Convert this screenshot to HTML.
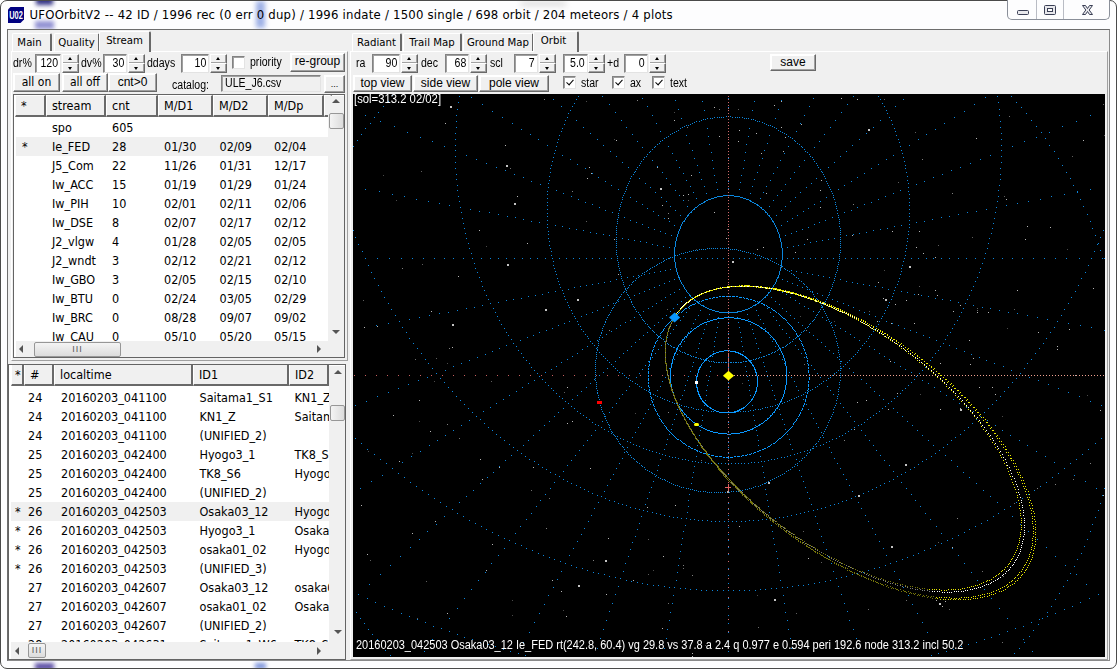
<!DOCTYPE html>
<html><head><meta charset="utf-8"><title>UFOOrbitV2</title>
<style>
*{box-sizing:border-box;margin:0;padding:0}
html,body{width:1117px;height:669px;overflow:hidden;background:#fff}
body{position:relative;font-family:"Liberation Sans","Noto Sans CJK JP",sans-serif;font-size:12px;color:#000}
.a{position:absolute}
#win{left:0;top:0;width:1117px;height:669px;background:#fdfdfe;border:1px solid #4a4a4a;border-radius:7px 7px 7px 7px;box-shadow:inset 0 0 0 1px #fff}
#client{left:7px;top:29px;width:1103px;height:632px;background:#f0f0f0;border-left:1px solid #6d6d6d;border-top:1px solid #6d6d6d;border-right:1px solid #8a8a8a;border-bottom:1px solid #8a8a8a}
#title{left:29.5px;top:5px;font-family:"DejaVu Sans Condensed","Liberation Sans",sans-serif;font-size:13px;letter-spacing:.22px;line-height:20px;white-space:nowrap;color:#000}
#icon{left:8px;top:7px;width:16px;height:16px;background:#000080;border-radius:2px;color:#fff;font-size:8px;font-weight:bold;line-height:16px;text-align:center;letter-spacing:-0.5px}
#ctl{left:1007px;top:0;width:103px;height:20px;border:1px solid #8a8f99;border-top:none;border-radius:0 0 5px 5px;background:#fdfdfe}
#ctl i{position:absolute;top:0;width:1px;height:19px;background:#b9bcc4}
.tab{font-family:"DejaVu Sans Condensed","Liberation Sans",sans-serif;height:18px;top:33px;border:1px solid #fff;border-right:2px solid #696969;border-bottom:none;border-radius:2px 2px 0 0;background:#f0f0f0;text-align:center;line-height:17px;font-size:11.3px;white-space:nowrap}
.tab.sel{top:31px;height:21px;line-height:18px;z-index:3;border-left:1px solid #fff;border-top:1px solid #fff}
.pane{border:1px solid #fff;border-right:1px solid #a0a0a0;border-bottom:1px solid #a0a0a0;background:#f0f0f0}
.lbl{font-size:12px;line-height:14px;white-space:nowrap;transform:scaleX(.88);transform-origin:0 50%}
.g{display:inline-block;transform:scaleX(.88);transform-origin:100% 50%}
.gc{display:inline-block;transform:scaleX(.9);transform-origin:50% 50%}
.dj{font-family:"DejaVu Sans Condensed","Liberation Sans",sans-serif;font-size:11px}
.inp{height:19px;background:#fff;border:1px solid #828282;border-right-color:#e3e3e3;border-bottom-color:#e3e3e3;box-shadow:inset 1px 1px 0 #a0a0a0;text-align:right;font-size:12px;line-height:16px;padding-right:2px}
.spin{width:17px;height:19px}
.spin b{position:absolute;left:0;width:17px;height:10px;background:#f0f0f0;border:1px solid #fff;border-right:1px solid #696969;border-bottom:1px solid #696969;box-shadow:inset -1px -1px 0 #a0a0a0}
.spin b:first-child{top:0}.spin b:last-child{top:9px}
.spin b::after{content:"";position:absolute;left:5px;top:2px;border:2.5px solid transparent}
.spin b:first-child::after{border-bottom:3px solid #000;border-top:none}
.spin b:last-child::after{border-top:3px solid #000;border-bottom:none;top:3px}
.btn{background:#f0f0f0;border:1px solid #fff;border-right:1px solid #696969;border-bottom:1px solid #696969;box-shadow:inset -1px -1px 0 #a0a0a0,inset 1px 1px 0 #fff;text-align:center;font-size:12px;white-space:nowrap}
.chk{width:13px;height:13px;background:#fff;border:1px solid #828282;border-right-color:#e3e3e3;border-bottom-color:#e3e3e3;box-shadow:inset 1px 1px 0 #a0a0a0}
.chk.on::after{content:"";position:absolute;left:3.500px;top:1px;width:3px;height:6px;border:solid #000;border-width:0 1.700px 1.700px 0;transform:rotate(42deg)}
.list{background:#fff;overflow:hidden}
.frame{background:#fff;border:1px solid #646464}
.hd{font-family:"DejaVu Sans Condensed","Liberation Sans",sans-serif;top:1px;height:22px;background:#f0f0f0;border:1px solid #fff;border-right:2px solid #696969;border-bottom:2px solid #696969;font-size:12.5px;line-height:19px;padding-left:5px;white-space:nowrap;overflow:hidden}
.row{font-family:"DejaVu Sans Condensed","Liberation Sans",sans-serif;left:2px;height:19px;font-size:12.5px;line-height:19px;white-space:nowrap}
.row span{position:absolute;top:0}
.row.sel{background:#f0f0f0}
.sb{background:#f0f0f0}
.thumb{background:linear-gradient(90deg,#f4f4f4,#dcdcdc);border:1px solid #979797;border-radius:2px}
.thumbh{background:linear-gradient(180deg,#f4f4f4,#dcdcdc);border:1px solid #979797;border-radius:2px}
.ar{width:0;height:0;border:4px solid transparent}
#cv{left:353px;top:94px;width:752px;height:563px;background:#000;overflow:hidden}
#cv svg{position:absolute;left:-1px;top:-1px}
.ct{color:#fff;font-size:12px;line-height:13px;white-space:nowrap;transform-origin:0 0}
</style></head><body>
<div id="win" class="a"></div>
<div class="a" style="left:1px;top:1px;width:1115px;height:667px;overflow:hidden;border-radius:6px">
<div class="a" style="left:35px;top:-5px;width:17px;height:9px;background:#2a2a80;filter:blur(2px);opacity:.95"></div>
<div class="a" style="left:34px;top:20px;width:19px;height:8px;background:#8080cc;filter:blur(2px);opacity:.85"></div>
<div class="a" style="left:255px;top:0px;width:9px;height:27px;background:#5c7cd6;filter:blur(2.5px);opacity:.6"></div>
<div class="a" style="left:34px;top:662px;width:19px;height:7px;background:#3f2f95;filter:blur(2px);opacity:.85"></div>
<div class="a" style="left:254px;top:662px;width:11px;height:6px;background:#4f6fd0;filter:blur(2px);opacity:.75"></div>
<div class="a" style="left:520px;top:0px;width:45px;height:5px;background:#9a9a9a;filter:blur(3px);opacity:.35"></div>
</div>
<svg class="a" style="left:8px;top:7px" width="16" height="16" viewBox="0 0 16 16"><path d="M2.500 0H16V12.500L12.500 16H0V2.500Z" fill="#000080"/><text x="1.200" y="11.600" font-size="10" font-weight="bold" fill="#fff" font-family="Liberation Sans,sans-serif" textLength="13.600" lengthAdjust="spacingAndGlyphs">U02</text></svg>
<div id="title" class="a">UFOOrbitV2 -- 42 ID / 1996 rec (0 err 0 dup) / 1996 indate / 1500 single / 698 orbit / 204 meteors / 4 plots</div>
<div id="ctl" class="a"><i style="left:28px"></i><i style="left:55px"></i>
<svg class="a" style="left:0;top:0" width="103" height="20" viewBox="0 0 103 20"><rect x="9.5" y="10.5" width="11" height="4" rx="1" fill="#e8e8ec" stroke="#3a3f55"/><rect x="36.500" y="5.500" width="11" height="9" rx="1" fill="#e8e8ec" stroke="#3a3f55"/><rect x="39.500" y="8.500" width="5" height="3" fill="#fff" stroke="#3a3f55"/><path d="M74.500 5.500h3l2 3 2-3h3l-3.300 4.500 3.300 4.500h-3l-2-3-2 3h-3l3.300-4.500z" fill="#e8e8ec" stroke="#3a3f55" stroke-width="1"/></svg></div>
<div id="client" class="a"></div>
<div class="a pane" style="left:11px;top:51px;width:337px;height:310px"></div>
<div class="a tab" style="left:12px;width:40px"><span style="position:relative;left:-2px">Main</span></div>
<div class="a tab" style="left:54px;width:46px">Quality</div>
<div class="a tab sel" style="left:99px;width:52px">Stream</div>
<div class="a lbl" style="left:13px;top:55.5px;">dr%</div>
<div class="a inp" style="left:35px;top:54px;width:26px"><span class="g">120</span></div>
<div class="a spin" style="left:62px;top:54px"><b></b><b></b></div>
<div class="a lbl" style="left:81px;top:55.5px;">dv%</div>
<div class="a inp" style="left:103px;top:54px;width:24px"><span class="g">30</span></div>
<div class="a spin" style="left:128px;top:54px"><b></b><b></b></div>
<div class="a lbl" style="left:147px;top:55.5px;">ddays</div>
<div class="a inp" style="left:181px;top:54px;width:28px"><span class="g">10</span></div>
<div class="a spin" style="left:210px;top:54px"><b></b><b></b></div>
<div class="a chk" style="left:232px;top:56px"></div>
<div class="a lbl" style="left:250px;top:54.5px;">priority</div>
<div class="a btn " style="left:290px;top:53px;width:55px;height:19px;line-height:14px">re-group</div>
<div class="a btn dj" style="left:13px;top:73px;width:47px;height:19px;line-height:17px">all on</div>
<div class="a btn dj" style="left:62px;top:73px;width:46px;height:19px;line-height:17px">all off</div>
<div class="a btn " style="left:108px;top:73px;width:49px;height:19px;line-height:17px">cnt&gt;0</div>
<div class="a lbl" style="left:172px;top:78px;">catalog:</div>
<div class="a inp" style="left:221px;top:75px;width:100px;height:17px;text-align:left;padding-left:3px;line-height:15px;background:#f0f0f0"><span class="g" style="transform-origin:0 50%">ULE_J6.csv</span></div>
<div class="a btn " style="left:324px;top:75px;width:21px;height:18px;line-height:12px"><span style="font-size:9px;position:relative;top:1px">...</span></div>
<div class="a frame" style="left:13px;top:94px;width:332px;height:264px"></div>
<div class="a list" style="left:14px;top:95px;width:330px;height:262px"><div class="a" style="left:0;top:-1px">
<div class="a hd" style="left:1px;width:31px">*</div>
<div class="a hd" style="left:32px;width:60px">stream</div>
<div class="a hd" style="left:92px;width:52px">cnt</div>
<div class="a hd" style="left:144px;width:55px">M/D1</div>
<div class="a hd" style="left:199px;width:55px">M/D2</div>
<div class="a hd" style="left:254px;width:56px">M/Dp</div>
<div class="a hd" style="left:310px;width:6px"></div>
<div class="a row" style="top:24px;width:312px"><span style="left:36px">spo</span><span style="left:96px">605</span></div>
<div class="a row sel" style="top:43px;width:312px"><span style="left:6px">*</span><span style="left:36px">Ie_FED</span><span style="left:96px">28</span><span style="left:148px">01/30</span><span style="left:203.5px">02/09</span><span style="left:258px">02/04</span></div>
<div class="a row" style="top:62px;width:312px"><span style="left:36px">J5_Com</span><span style="left:96px">22</span><span style="left:148px">11/26</span><span style="left:203.5px">01/31</span><span style="left:258px">12/17</span></div>
<div class="a row" style="top:81px;width:312px"><span style="left:36px">Iw_ACC</span><span style="left:96px">15</span><span style="left:148px">01/19</span><span style="left:203.5px">01/29</span><span style="left:258px">01/24</span></div>
<div class="a row" style="top:100px;width:312px"><span style="left:36px">Iw_PIH</span><span style="left:96px">10</span><span style="left:148px">02/01</span><span style="left:203.5px">02/11</span><span style="left:258px">02/06</span></div>
<div class="a row" style="top:119px;width:312px"><span style="left:36px">Iw_DSE</span><span style="left:96px">8</span><span style="left:148px">02/07</span><span style="left:203.5px">02/17</span><span style="left:258px">02/12</span></div>
<div class="a row" style="top:138px;width:312px"><span style="left:36px">J2_vlgw</span><span style="left:96px">4</span><span style="left:148px">01/28</span><span style="left:203.5px">02/05</span><span style="left:258px">02/05</span></div>
<div class="a row" style="top:157px;width:312px"><span style="left:36px">J2_wndt</span><span style="left:96px">3</span><span style="left:148px">02/12</span><span style="left:203.5px">02/21</span><span style="left:258px">02/12</span></div>
<div class="a row" style="top:176px;width:312px"><span style="left:36px">Iw_GBO</span><span style="left:96px">3</span><span style="left:148px">02/05</span><span style="left:203.5px">02/15</span><span style="left:258px">02/10</span></div>
<div class="a row" style="top:195px;width:312px"><span style="left:36px">Iw_BTU</span><span style="left:96px">0</span><span style="left:148px">02/24</span><span style="left:203.5px">03/05</span><span style="left:258px">02/29</span></div>
<div class="a row" style="top:214px;width:312px"><span style="left:36px">Iw_BRC</span><span style="left:96px">0</span><span style="left:148px">08/28</span><span style="left:203.5px">09/07</span><span style="left:258px">09/02</span></div>
<div class="a row" style="top:233px;width:312px"><span style="left:36px">Iw_CAU</span><span style="left:96px">0</span><span style="left:148px">05/10</span><span style="left:203.5px">05/20</span><span style="left:258px">05/15</span></div>
<div class="a sb" style="left:314px;top:2px;width:17px;height:245px"></div>
<div class="a ar" style="left:318px;top:5px;border-bottom:4px solid #555;border-top:none"></div>
<div class="a ar" style="left:318px;top:236px;border-top:4px solid #555;border-bottom:none"></div>
<div class="a thumb" style="left:315px;top:19px;width:15px;height:16px"></div>
<div class="a sb" style="left:2px;top:247px;width:329px;height:17px"></div>
<div class="a ar" style="left:5px;top:251px;border-right:4px solid #555;border-left:none"></div>
<div class="a ar" style="left:303px;top:251px;border-left:4px solid #555;border-right:none"></div>
<div class="a thumbh" style="left:20px;top:248px;width:87px;height:15px;text-align:center;font-size:9px;line-height:12px;letter-spacing:1px;color:#555">III</div>
</div></div>
<div class="a frame" style="left:8px;top:364px;width:338px;height:296px"></div>
<div class="a list" style="left:9px;top:365px;width:336px;height:294px"><div class="a" style="left:0;top:-1px">
<div class="a hd" style="left:2px;width:13px;top:0px;padding-left:3px;">*</div>
<div class="a hd" style="left:15px;width:30px;top:0px;">#</div>
<div class="a hd" style="left:45px;width:139px;top:0px;">localtime</div>
<div class="a hd" style="left:184px;width:96px;top:0px;">ID1</div>
<div class="a hd" style="left:280px;width:40px;top:0px;">ID2</div>
<div class="a row" style="top:24px;width:318px;overflow:hidden"><span style="left:17px">24</span><span style="left:50px">20160203_041100</span><span style="left:188.5px">Saitama1_S1</span><span style="left:283.5px">KN1_Z</span></div>
<div class="a row" style="top:43px;width:318px;overflow:hidden"><span style="left:17px">24</span><span style="left:50px">20160203_041100</span><span style="left:188.5px">KN1_Z</span><span style="left:283.5px">Saitama1_S1</span></div>
<div class="a row" style="top:62px;width:318px;overflow:hidden"><span style="left:17px">24</span><span style="left:50px">20160203_041100</span><span style="left:188.5px">(UNIFIED_2)</span></div>
<div class="a row" style="top:81px;width:318px;overflow:hidden"><span style="left:17px">25</span><span style="left:50px">20160203_042400</span><span style="left:188.5px">Hyogo3_1</span><span style="left:283.5px">TK8_S6</span></div>
<div class="a row" style="top:100px;width:318px;overflow:hidden"><span style="left:17px">25</span><span style="left:50px">20160203_042400</span><span style="left:188.5px">TK8_S6</span><span style="left:283.5px">Hyogo3_1</span></div>
<div class="a row" style="top:119px;width:318px;overflow:hidden"><span style="left:17px">25</span><span style="left:50px">20160203_042400</span><span style="left:188.5px">(UNIFIED_2)</span></div>
<div class="a row sel" style="top:138px;width:318px;overflow:hidden"><span style="left:4px">*</span><span style="left:17px">26</span><span style="left:50px">20160203_042503</span><span style="left:188.5px">Osaka03_12</span><span style="left:283.5px">Hyogo3_1</span></div>
<div class="a row" style="top:157px;width:318px;overflow:hidden"><span style="left:4px">*</span><span style="left:17px">26</span><span style="left:50px">20160203_042503</span><span style="left:188.5px">Hyogo3_1</span><span style="left:283.5px">Osaka03_12</span></div>
<div class="a row" style="top:176px;width:318px;overflow:hidden"><span style="left:4px">*</span><span style="left:17px">26</span><span style="left:50px">20160203_042503</span><span style="left:188.5px">osaka01_02</span><span style="left:283.5px">Hyogo3_1</span></div>
<div class="a row" style="top:195px;width:318px;overflow:hidden"><span style="left:4px">*</span><span style="left:17px">26</span><span style="left:50px">20160203_042503</span><span style="left:188.5px">(UNIFIED_3)</span></div>
<div class="a row" style="top:214px;width:318px;overflow:hidden"><span style="left:17px">27</span><span style="left:50px">20160203_042607</span><span style="left:188.5px">Osaka03_12</span><span style="left:283.5px">osaka01_02</span></div>
<div class="a row" style="top:233px;width:318px;overflow:hidden"><span style="left:17px">27</span><span style="left:50px">20160203_042607</span><span style="left:188.5px">osaka01_02</span><span style="left:283.5px">Osaka03_12</span></div>
<div class="a row" style="top:252px;width:318px;overflow:hidden"><span style="left:17px">27</span><span style="left:50px">20160203_042607</span><span style="left:188.5px">(UNIFIED_2)</span></div>
<div class="a row" style="top:271px;width:318px;overflow:hidden"><span style="left:17px">28</span><span style="left:50px">20160203_042631</span><span style="left:188.5px">Saitama1_W6</span><span style="left:283.5px">TK8_S6</span></div>
<div class="a sb" style="left:320px;top:2px;width:17px;height:276px"></div>
<div class="a ar" style="left:325px;top:6px;border-bottom:4px solid #555;border-top:none"></div>
<div class="a ar" style="left:325px;top:266px;border-top:4px solid #555;border-bottom:none"></div>
<div class="a thumb" style="left:321px;top:41px;width:15px;height:16px"></div>
<div class="a sb" style="left:2px;top:278px;width:335px;height:17px"></div>
<div class="a ar" style="left:6px;top:283px;border-right:4px solid #555;border-left:none"></div>
<div class="a ar" style="left:308px;top:283px;border-left:4px solid #555;border-right:none"></div>
<div class="a thumbh" style="left:19px;top:279px;width:18px;height:15px;text-align:center;font-size:9px;line-height:12px;letter-spacing:1px;color:#555">III</div>
</div></div>
<div class="a pane" style="left:350px;top:51px;width:758px;height:609px"></div>
<div class="a tab" style="left:352px;width:50px">Radiant</div>
<div class="a tab" style="left:403px;width:59px">Trail Map</div>
<div class="a tab" style="left:463px;width:71px">Ground Map</div>
<div class="a tab sel" style="left:533px;width:46px"><span style="position:relative;left:-2px">Orbit</span></div>
<div class="a lbl" style="left:356px;top:55.5px;">ra</div>
<div class="a inp" style="left:372px;top:54px;width:28px"><span class="g">90</span></div>
<div class="a spin" style="left:401px;top:54px"><b></b><b></b></div>
<div class="a lbl" style="left:421px;top:55.5px;">dec</div>
<div class="a inp" style="left:445px;top:54px;width:24px"><span class="g">68</span></div>
<div class="a spin" style="left:470px;top:54px"><b></b><b></b></div>
<div class="a lbl" style="left:490px;top:55.5px;">scl</div>
<div class="a inp" style="left:514px;top:54px;width:24px"><span class="g">7</span></div>
<div class="a spin" style="left:539px;top:54px"><b></b><b></b></div>
<div class="a inp" style="left:563px;top:54px;width:25px"><span class="g">5.0</span></div>
<div class="a spin" style="left:588px;top:54px"><b></b><b></b></div>
<div class="a lbl" style="left:607px;top:55.5px;">+d</div>
<div class="a inp" style="left:624px;top:54px;width:24px"><span class="g">0</span></div>
<div class="a spin" style="left:649px;top:54px"><b></b><b></b></div>
<div class="a btn " style="left:770px;top:54px;width:46px;height:17px;line-height:14px">save</div>
<div class="a btn " style="left:353px;top:75px;width:59px;height:17px;line-height:15px">top view</div>
<div class="a btn " style="left:413px;top:75px;width:65px;height:17px;line-height:15px">side view</div>
<div class="a btn " style="left:479px;top:75px;width:70px;height:17px;line-height:15px">pole view</div>
<div class="a chk on" style="left:563px;top:76px"></div>
<div class="a lbl" style="left:581px;top:76px;">star</div>
<div class="a chk on" style="left:612px;top:76px"></div>
<div class="a lbl" style="left:630px;top:76px;">ax</div>
<div class="a chk on" style="left:652px;top:76px"></div>
<div class="a lbl" style="left:670px;top:76px;">text</div>
<div id="cv" class="a"><svg width="753" height="564" viewBox="0 0 753 564" shape-rendering="crispEdges">
<path d="M40 2h1M107 3h1M226 3h1M250 3h1M501 3h1M526 3h1M645 3h1M659 3h1M119 4h1M633 4h1M290 5h1M376 5h1M461 5h1M201 6h1M224 6h1M528 6h1M551 6h1M323 7h1M429 7h1M36 8h1M350 8h1M402 8h1M106 9h1M646 9h1M664 9h1M222 10h1M530 10h1M130 11h1M257 11h1M495 11h1M622 11h1M31 13h1M209 13h1M220 13h1M295 13h1M457 13h1M532 13h1M543 13h1M376 14h1M669 14h1M105 16h1M326 16h1M426 16h1M647 16h1M218 17h1M352 17h1M400 17h1M534 17h1M140 18h1M612 18h1M26 19h1M263 19h1M489 19h1M216 20h1M535 20h1M674 20h1M13 22h1M104 22h1M300 22h1M452 22h1M647 22h1M738 22h1M374 23h1M376 23h1M378 23h1M22 24h1M150 24h1M215 24h1M362 24h1M365 24h1M367 24h1M369 24h1M371 24h1M380 24h1M383 24h1M385 24h1M387 24h1M390 24h1M537 24h1M602 24h1M329 25h1M355 25h1M358 25h1M360 25h1M392 25h1M394 25h1M396 25h1M423 25h1M351 26h1M353 26h1M399 26h1M401 26h1M213 27h1M224 27h1M269 27h1M349 27h1M403 27h1M483 27h1M528 27h1M539 27h1M679 27h1M28 28h1M104 28h1M344 28h1M347 28h1M405 28h1M407 28h1M648 28h1M724 28h1M342 29h1M410 29h1M18 30h1M160 30h1M304 30h1M340 30h1M412 30h1M448 30h1M592 30h1M212 31h1M338 31h1M414 31h1M540 31h1M334 32h1M336 32h1M376 32h1M416 32h1M418 32h1M42 33h1M332 33h1M420 33h1M684 33h1M710 33h1M104 34h1M231 34h1M274 34h1M330 34h1M422 34h1M478 34h1M521 34h1M648 34h1M13 35h1M210 35h1M328 35h1M355 35h1M397 35h1M424 35h1M542 35h1M169 36h1M583 36h1M326 37h1M426 37h1M209 38h1M308 38h1M324 38h1M428 38h1M444 38h1M543 38h1M55 39h1M322 39h1M430 39h1M689 39h1M697 39h1M103 40h1M238 40h1M320 40h1M432 40h1M514 40h1M649 40h1M9 41h1M178 41h1M280 41h1M318 41h1M376 41h1M434 41h1M472 41h1M574 41h1M207 42h1M334 42h1M417 42h1M544 42h1M316 43h1M356 43h1M396 43h1M436 43h1M68 44h1M314 44h1M438 44h1M684 44h1M312 45h1M440 45h1M693 45h1M103 46h1M186 46h1M206 46h1M245 46h1M507 46h1M546 46h1M566 46h1M649 46h1M5 47h1M310 47h1M442 47h1M80 48h1M285 48h1M308 48h1M443 48h1M467 48h1M672 48h1M205 49h1M376 49h1M547 49h1M307 50h1M337 50h1M415 50h1M445 50h1M305 51h1M357 51h1M394 51h1M447 51h1M103 52h1M195 52h1M251 52h1M500 52h1M557 52h1M649 52h1M697 52h1M1 53h1M92 53h1M204 53h1M303 53h1M316 53h1M436 53h1M449 53h1M548 53h1M660 53h1M290 54h1M302 54h1M450 54h1M462 54h1M300 56h1M452 56h1M103 57h1M203 57h1M340 57h1M412 57h1M549 57h1M649 57h1M258 58h1M298 58h1M376 58h1M453 58h1M494 58h1M702 58h1M297 59h1M359 59h1M393 59h1M455 59h1M202 60h1M320 60h1M432 60h1M550 60h1M295 61h1M457 61h1M114 62h1M210 62h1M541 62h1M638 62h1M103 63h1M264 63h1M294 63h1M458 63h1M488 63h1M649 63h1M201 64h1M292 64h1M460 64h1M551 64h1M342 65h1M376 65h1M410 65h1M706 65h1M124 66h1M218 66h1M291 66h1M461 66h1M534 66h1M628 66h1M300 67h1M324 67h1M360 67h1M392 67h1M428 67h1M452 67h1M200 68h1M289 68h1M462 68h1M552 68h1M103 69h1M270 69h1M482 69h1M649 69h1M134 70h1M288 70h1M464 70h1M618 70h1M225 71h1M526 71h1M199 72h1M287 72h1M345 72h1M407 72h1M465 72h1M553 72h1M710 72h1M305 73h1M376 73h1M447 73h1M144 74h1M276 74h1M285 74h1M327 74h1M425 74h1M466 74h1M476 74h1M608 74h1M103 75h1M198 75h1M233 75h1M361 75h1M391 75h1M519 75h1M553 75h1M648 75h1M284 76h1M468 76h1M153 77h1M599 77h1M283 78h1M469 78h1M198 79h1M282 79h1M310 79h1M347 79h1M405 79h1M442 79h1M470 79h1M554 79h1M714 79h1M240 80h1M331 80h1M421 80h1M512 80h1M104 81h1M162 81h1M281 81h1M376 81h1M471 81h1M590 81h1M648 81h1M362 82h1M389 82h1M197 83h1M279 83h1M472 83h1M555 83h1M171 84h1M246 84h1M505 84h1M581 84h1M278 85h1M287 85h1M314 85h1M438 85h1M464 85h1M473 85h1M718 85h1M104 86h1M349 86h1M402 86h1M648 86h1M197 87h1M334 87h1M418 87h1M555 87h1M179 88h1M253 88h1M277 88h1M376 88h1M474 88h1M499 88h1M572 88h1M364 89h1M388 89h1M196 90h1M276 90h1M293 90h1M459 90h1M475 90h1M556 90h1M188 91h1M318 91h1M433 91h1M564 91h1M105 92h1M259 92h1M275 92h1M476 92h1M492 92h1M647 92h1M721 92h1M338 93h1M352 93h1M400 93h1M414 93h1M196 94h1M274 94h1M298 94h1M454 94h1M477 94h1M556 94h1M376 95h1M13 96h1M266 96h1M274 96h1M365 96h1M387 96h1M478 96h1M486 96h1M738 96h1M105 97h1M204 97h1M323 97h1M429 97h1M548 97h1M646 97h1M27 98h1M195 98h1M273 98h1M479 98h1M556 98h1M725 98h1M303 99h1M341 99h1M411 99h1M448 99h1M725 99h1M211 100h1M272 100h1M354 100h1M398 100h1M480 100h1M541 100h1M40 101h1M195 101h1M557 101h1M712 101h1M271 102h1M327 102h1M371 102h11M425 102h1M481 102h1M52 103h1M106 103h1M219 103h1M365 103h6M382 103h6M533 103h1M646 103h1M699 103h1M270 104h1M278 104h1M309 104h1M362 104h3M388 104h3M443 104h1M474 104h1M481 104h1M195 105h1M344 105h1M359 105h3M391 105h3M408 105h1M557 105h1M64 106h1M226 106h1M270 106h1M356 106h3M394 106h3M482 106h1M526 106h1M688 106h1M728 106h1M331 107h1M354 107h2M397 107h2M421 107h1M76 108h1M107 108h1M284 108h1M314 108h1M352 108h2M398 108h2M438 108h1M468 108h1M645 108h1M676 108h1M195 109h1M233 109h1M269 109h1M351 109h2M400 109h2M483 109h1M519 109h1M557 109h1M87 110h1M349 110h2M402 110h2M665 110h1M240 111h1M268 111h1M290 111h1M347 111h2M404 111h2M462 111h1M483 111h1M512 111h1M97 112h1M195 112h1M346 112h1M405 112h2M557 112h1M654 112h1M268 113h1M318 113h1M335 113h1M345 113h1M407 113h1M417 113h1M433 113h1M484 113h1M731 113h1M108 114h1M247 114h1M343 114h2M408 114h2M505 114h1M644 114h1M267 115h1M295 115h1M342 115h1M409 115h1M456 115h1M484 115h1M118 116h1M195 116h1M341 116h2M410 116h2M557 116h1M634 116h1M253 117h1M267 117h1M323 117h1M340 117h1M412 117h1M429 117h1M485 117h1M499 117h1M127 118h1M301 118h1M339 118h1M413 118h1M451 118h1M624 118h1M109 119h1M137 119h1M260 119h1M338 119h2M413 119h2M492 119h1M615 119h1M643 119h1M195 120h1M266 120h1M337 120h1M415 120h1M485 120h1M557 120h1M146 121h1M336 121h1M415 121h1M606 121h1M735 121h1M266 122h1M306 122h1M328 122h1M335 122h2M416 122h2M424 122h1M445 122h1M486 122h1M155 123h1M195 123h1M335 123h1M417 123h1M557 123h1M597 123h1M163 124h1M266 124h1M272 124h1M334 124h1M418 124h1M480 124h1M486 124h1M589 124h1M110 125h1M312 125h1M333 125h1M419 125h1M440 125h1M642 125h1M171 126h1M265 126h1M333 126h1M419 126h1M487 126h1M580 126h1M195 127h1M278 127h1M332 127h1M420 127h1M473 127h1M557 127h1M179 128h1M265 128h1M317 128h1M331 128h2M420 128h2M435 128h1M487 128h1M572 128h1M738 128h1M187 129h1M284 129h1M330 129h1M421 129h1M467 129h1M564 129h1M111 130h1M265 130h1M330 130h1M422 130h1M487 130h1M641 130h1M195 131h1M290 131h1M329 131h1M422 131h1M462 131h1M557 131h1M203 132h1M322 132h1M329 132h1M423 132h1M429 132h1M549 132h1M210 133h1M264 133h1M328 133h1M423 133h1M487 133h1M542 133h1M195 134h1M296 134h1M328 134h1M424 134h1M456 134h1M557 134h1M112 135h1M217 135h1M264 135h1M328 135h1M424 135h1M488 135h1M535 135h1M640 135h1M740 135h1M224 136h1M302 136h1M327 136h1M425 136h1M450 136h1M528 136h1M1 137h1M231 137h1M264 137h1M327 137h1M425 137h1M488 137h1M521 137h1M751 137h1M196 138h1M308 138h1M326 138h1M425 138h1M444 138h1M556 138h1M238 139h1M264 139h1M326 139h1M426 139h1M488 139h1M514 139h1M113 140h1M244 140h1M313 140h1M326 140h1M426 140h1M439 140h1M507 140h1M639 140h1M196 141h1M251 141h1M264 141h1M325 141h1M427 141h1M488 141h1M501 141h1M556 141h1M257 142h1M319 142h1M325 142h1M427 142h1M433 142h1M494 142h1M743 142h1M325 143h1M427 143h1M3 144h1M264 144h1M324 144h1M427 144h1M488 144h1M748 144h1M114 145h1M196 145h1M270 145h1M324 145h1M428 145h1M482 145h1M555 145h1M637 145h1M264 146h1M276 146h1M324 146h1M428 146h1M476 146h1M488 146h1M282 147h1M324 147h1M428 147h1M470 147h1M197 148h1M264 148h1M288 148h1M323 148h1M428 148h1M464 148h1M488 148h1M555 148h1M294 149h1M323 149h1M429 149h1M458 149h1M116 150h1M264 150h1M323 150h1M429 150h1M488 150h1M636 150h1M746 150h1M6 151h1M300 151h1M323 151h1M429 151h1M452 151h1M745 151h1M197 152h1M264 152h1M305 152h1M323 152h1M429 152h1M446 152h1M488 152h1M554 152h1M311 153h1M323 153h1M429 153h1M441 153h1M264 154h1M317 154h1M322 154h1M429 154h1M435 154h1M488 154h1M117 155h1M198 155h1M322 155h1M355 155h1M357 155h1M359 155h1M361 155h1M363 155h1M365 155h1M368 155h1M370 155h1M372 155h1M374 155h1M376 155h1M430 155h1M554 155h1M635 155h1M322 156h1M347 156h1M349 156h1M351 156h1M353 156h1M378 156h1M380 156h1M382 156h1M384 156h1M430 156h1M264 157h1M322 157h1M341 157h1M343 157h1M345 157h1M386 157h1M388 157h1M430 157h1M488 157h1M748 157h1M10 158h1M199 158h1M322 158h1M337 158h1M339 158h1M390 158h1M392 158h1M430 158h1M553 158h1M742 158h1M264 159h1M322 159h1M333 159h1M335 159h1M394 159h1M396 159h1M430 159h1M488 159h1M119 160h1M322 160h1M329 160h1M331 160h1M398 160h1M401 160h1M430 160h1M633 160h1M264 161h1M322 161h1M327 161h1M403 161h1M430 161h1M487 161h1M199 162h1M322 162h2M325 162h1M405 162h1M407 162h1M430 162h1M553 162h1M265 163h1M322 163h1M409 163h1M430 163h1M487 163h1M318 164h1M320 164h1M322 164h1M411 164h1M430 164h1M13 165h1M25 165h1M37 165h1M49 165h1M60 165h1M71 165h1M82 165h1M92 165h1M101 165h1M111 165h1M120 165h1M129 165h1M138 165h1M146 165h1M154 165h1M162 165h1M170 165h1M178 165h1M185 165h1M193 165h1M200 165h1M207 165h1M214 165h1M221 165h1M227 165h1M234 165h1M240 165h1M247 165h1M253 165h1M259 165h1M265 165h1M271 165h1M277 165h1M283 165h1M288 165h1M294 165h1M300 165h1M306 165h1M311 165h1M316 165h2M322 165h1M328 165h1M333 165h1M338 165h1M344 165h1M349 165h1M355 165h1M360 165h1M365 165h1M371 165h1M376 165h1M381 165h1M387 165h1M392 165h1M397 165h1M403 165h1M408 165h1M413 165h1M415 165h1M419 165h1M424 165h1M430 165h1M435 165h1M441 165h1M446 165h1M452 165h1M458 165h1M463 165h1M469 165h1M475 165h1M481 165h1M487 165h1M493 165h1M499 165h1M505 165h1M512 165h1M518 165h1M525 165h1M531 165h1M538 165h1M545 165h1M552 165h1M559 165h1M566 165h1M574 165h1M581 165h1M589 165h1M597 165h1M606 165h1M614 165h1M623 165h1M632 165h1M641 165h1M650 165h1M660 165h1M670 165h1M681 165h1M692 165h1M703 165h1M714 165h1M727 165h1M739 165h1M750 165h1M752 165h1M314 166h1M322 166h1M416 166h1M430 166h1M265 167h1M312 167h1M322 167h1M418 167h1M429 167h1M487 167h1M201 168h1M311 168h1M322 168h1M420 168h1M429 168h1M551 168h1M266 169h1M309 169h1M323 169h1M422 169h1M429 169h1M486 169h1M122 170h1M307 170h1M323 170h1M424 170h1M429 170h1M630 170h1M266 171h1M305 171h1M323 171h1M426 171h1M429 171h1M486 171h1M16 172h1M201 172h1M304 172h1M323 172h1M428 172h2M550 172h1M736 172h1M266 173h1M302 173h1M323 173h1M429 173h2M485 173h1M300 174h1M323 174h1M428 174h1M123 175h1M202 175h1M267 175h1M298 175h1M324 175h1M428 175h1M432 175h1M485 175h1M549 175h1M628 175h1M297 176h1M318 176h1M324 176h1M428 176h1M433 176h1M267 177h1M295 177h1M313 177h1M324 177h1M428 177h1M435 177h1M439 177h1M485 177h1M203 178h1M294 178h1M308 178h1M324 178h1M427 178h1M437 178h1M444 178h1M549 178h1M19 179h1M125 179h1M268 179h1M292 179h1M302 179h1M325 179h1M427 179h1M449 179h1M484 179h1M627 179h1M733 179h1M290 180h1M297 180h1M325 180h1M427 180h1M439 180h1M455 180h1M204 181h1M268 181h1M292 181h1M325 181h1M427 181h1M441 181h1M460 181h1M483 181h1M548 181h1M286 182h1M289 182h1M326 182h1M426 182h1M442 182h1M466 182h1M269 183h1M281 183h1M287 183h1M326 183h1M426 183h1M471 183h1M483 183h1M127 184h1M275 184h1M286 184h1M326 184h2M425 184h2M444 184h1M477 184h1M625 184h1M22 185h1M205 185h1M269 185h1M284 185h1M327 185h1M425 185h1M446 185h1M482 185h1M547 185h1M729 185h1M264 186h1M322 186h1M327 186h1M424 186h1M430 186h1M488 186h1M270 187h1M283 187h1M328 187h1M424 187h1M447 187h1M482 187h1M129 188h1M206 188h1M258 188h1M281 188h1M317 188h1M328 188h1M424 188h1M435 188h1M449 188h1M494 188h1M546 188h1M623 188h1M252 189h1M271 189h1M280 189h1M329 189h1M423 189h1M481 189h1M500 189h1M246 190h1M312 190h1M329 190h1M423 190h1M440 190h1M451 190h1M505 190h1M207 191h1M240 191h1M271 191h1M279 191h1M330 191h1M422 191h1M452 191h1M480 191h1M511 191h1M545 191h1M26 192h1M234 192h1M277 192h1M307 192h1M331 192h1M421 192h1M445 192h1M517 192h1M726 192h1M130 193h1M228 193h1M272 193h1M331 193h1M421 193h1M454 193h1M480 193h1M523 193h1M621 193h1M208 194h1M222 194h1M276 194h1M302 194h1M332 194h1M420 194h1M450 194h1M455 194h1M530 194h1M543 194h1M273 195h1M275 195h1M332 195h1M420 195h1M479 195h1M216 196h1M273 196h1M297 196h1M327 196h1M333 196h1M419 196h1M425 196h1M455 196h1M457 196h1M536 196h1M132 197h1M210 197h1M274 197h1M334 197h1M418 197h1M478 197h1M542 197h1M619 197h1M29 198h1M203 198h1M272 198h1M292 198h1M334 198h1M418 198h1M458 198h1M460 198h1M549 198h1M723 198h1M196 199h1M271 199h1M274 199h1M322 199h1M335 199h1M416 199h2M430 199h1M460 199h1M477 199h1M555 199h1M211 200h1M287 200h1M336 200h1M416 200h1M465 200h1M541 200h1M190 201h1M269 201h1M275 201h1M318 201h1M337 201h1M415 201h1M434 201h1M461 201h1M477 201h1M562 201h1M134 202h1M183 202h1M276 202h1M282 202h1M337 202h2M414 202h2M470 202h1M476 202h1M569 202h1M617 202h1M176 203h1M212 203h1M268 203h1M338 203h1M413 203h1M462 203h1M540 203h1M576 203h1M32 204h1M267 204h1M277 204h1M313 204h1M333 204h1M339 204h2M412 204h2M419 204h1M438 204h1M475 204h1M719 204h1M169 205h1M340 205h2M411 205h1M464 205h1M583 205h1M136 206h1M161 206h1M213 206h1M266 206h1M272 206h1M278 206h1M342 206h1M410 206h1M465 206h1M474 206h1M480 206h1M539 206h1M590 206h1M615 206h1M154 207h1M265 207h1M309 207h1M342 207h2M409 207h1M443 207h1M598 207h1M266 208h1M279 208h1M329 208h1M344 208h2M407 208h2M423 208h1M466 208h1M473 208h1M485 208h1M146 209h1M215 209h1M264 209h1M279 209h1M345 209h1M406 209h1M472 209h1M537 209h1M606 209h1M36 210h1M138 210h1M261 210h1M263 210h1M304 210h1M346 210h2M405 210h2M447 210h1M468 210h1M491 210h1M613 210h1M716 210h1M280 211h1M325 211h1M340 211h1M348 211h1M403 211h2M412 211h1M427 211h1M471 211h1M130 212h1M216 212h1M256 212h1M262 212h1M349 212h3M401 212h3M469 212h1M496 212h1M536 212h1M621 212h1M281 213h1M300 213h1M351 213h2M400 213h1M452 213h1M470 213h1M122 214h1M217 214h1M251 214h1M261 214h1M282 214h1M353 214h2M398 214h2M469 214h2M501 214h1M535 214h1M630 214h1M114 215h1M141 215h1M260 215h1M296 215h1M321 215h1M337 215h1M355 215h2M396 215h2M415 215h1M430 215h1M456 215h1M611 215h1M638 215h1M39 216h1M283 216h1M357 216h3M393 216h3M468 216h1M471 216h1M712 216h1M105 217h1M219 217h1M245 217h1M259 217h1M348 217h1M360 217h3M390 217h3M404 217h1M507 217h1M533 217h1M647 217h1M284 218h1M291 218h1M318 218h1M363 218h4M385 218h5M434 218h1M461 218h1M467 218h1M472 218h1M96 219h1M143 219h1M240 219h1M258 219h1M286 219h1M334 219h1M367 219h19M418 219h1M466 219h1M512 219h1M609 219h1M656 219h1M87 220h1M220 220h1M473 220h1M532 220h1M665 220h1M234 221h1M257 221h1M287 221h1M357 221h1M395 221h1M465 221h1M517 221h1M43 222h1M77 222h1M256 222h1M288 222h1M314 222h1M346 222h1M406 222h1M438 222h1M464 222h1M474 222h1M675 222h1M709 222h1M145 223h1M222 223h1M229 223h1M331 223h1M421 223h1M523 223h1M530 223h1M607 223h1M67 224h1M255 224h1M282 224h1M289 224h1M366 224h1M376 224h1M385 224h1M463 224h1M470 224h1M475 224h1M685 224h1M223 225h1M310 225h1M442 225h1M529 225h1M57 226h1M254 226h1M290 226h1M343 226h1M355 226h1M396 226h1M408 226h1M462 226h1M476 226h1M695 226h1M147 227h1M278 227h1M291 227h1M328 227h1M424 227h1M461 227h1M474 227h1M605 227h1M47 228h1M217 228h1M225 228h1M253 228h1M292 228h1M460 228h1M477 228h1M527 228h1M534 228h1M705 228h1M253 229h1M273 229h1M306 229h1M366 229h1M386 229h1M446 229h1M479 229h1M36 230h1M212 230h1M293 230h1M341 230h1M376 230h1M411 230h1M458 230h1M478 230h1M540 230h1M716 230h1M149 231h1M226 231h1M252 231h1M295 231h1M354 231h1M398 231h1M457 231h1M526 231h1M602 231h1M24 232h1M206 232h1M268 232h1M302 232h1M324 232h1M427 232h1M450 232h1M479 232h1M483 232h1M546 232h1M728 232h1M228 233h1M251 233h1M296 233h1M456 233h1M524 233h1M12 234h1M50 234h1M297 234h1M365 234h1M387 234h1M455 234h1M480 234h1M702 234h1M739 234h1M152 235h1M200 235h1M250 235h1M264 235h1M298 235h1M339 235h1M376 235h1M413 235h1M453 235h1M488 235h1M552 235h1M600 235h1M229 236h1M321 236h1M352 236h1M400 236h1M430 236h1M522 236h1M0 237h1M194 237h1M250 237h1M300 237h1M452 237h1M481 237h1M558 237h1M752 237h1M231 238h1M259 238h1M301 238h1M451 238h1M493 238h1M521 238h1M54 239h1M154 239h1M187 239h1M249 239h1M295 239h1M302 239h1M336 239h1M364 239h1M388 239h1M416 239h1M449 239h1M457 239h1M482 239h1M564 239h1M598 239h1M698 239h1M249 240h1M318 240h1M351 240h1M376 240h1M401 240h1M434 240h1M233 241h1M254 241h1M304 241h1M448 241h1M482 241h1M498 241h1M519 241h1M156 242h1M181 242h1M248 242h1M291 242h1M305 242h1M447 242h1M461 242h1M571 242h1M595 242h1M235 243h1M306 243h1M445 243h1M483 243h1M517 243h1M175 244h1M247 244h1M250 244h1M308 244h1M315 244h1M334 244h1M363 244h1M389 244h1M418 244h1M437 244h1M444 244h1M502 244h1M577 244h1M57 245h1M236 245h1M309 245h1M349 245h1M376 245h1M403 245h1M443 245h1M484 245h1M516 245h1M694 245h1M159 246h1M247 246h1M287 246h1M311 246h1M441 246h1M465 246h1M593 246h1M168 247h1M245 247h1M507 247h1M584 247h1M238 248h1M246 248h1M312 248h1M332 248h1M362 248h1M389 248h1M420 248h1M440 248h1M484 248h1M514 248h1M283 249h1M313 249h1M438 249h1M469 249h1M61 250h1M161 250h1M240 250h1M246 250h1M315 250h1M347 250h1M376 250h1M404 250h1M437 250h1M485 250h1M512 250h1M591 250h1M691 250h1M316 251h1M435 251h1M154 252h1M242 252h1M246 252h1M309 252h1M318 252h1M434 252h1M443 252h1M485 252h1M510 252h1M597 252h1M164 253h1M235 253h1M279 253h1M319 253h1M329 253h1M362 253h1M390 253h1M423 253h1M433 253h1M473 253h1M517 253h1M588 253h1M245 254h1M321 254h2M430 254h2M486 254h1M65 255h1M147 255h1M244 255h1M324 255h1M346 255h1M376 255h1M406 255h1M428 255h1M508 255h1M604 255h1M687 255h1M230 256h1M245 256h1M306 256h1M325 256h1M426 256h1M446 256h1M522 256h1M166 257h1M245 257h1M275 257h1M327 257h1M425 257h1M477 257h1M486 257h1M506 257h1M586 257h1M140 258h1M328 258h1M361 258h1M391 258h1M423 258h1M612 258h1M244 259h1M247 259h1M330 259h1M332 259h1M344 259h1M408 259h1M420 259h1M422 259h1M486 259h1M505 259h1M69 260h1M169 260h1M225 260h1M271 260h1M303 260h1M333 260h1M376 260h1M419 260h1M449 260h1M481 260h1M527 260h1M583 260h1M683 260h1M133 261h1M244 261h1M249 261h1M325 261h1M335 261h2M416 261h2M427 261h1M487 261h1M503 261h1M619 261h1M338 262h1M414 262h1M220 263h1M244 263h1M251 263h1M339 263h1M341 263h1M360 263h1M392 263h1M411 263h2M487 263h1M501 263h1M532 263h1M125 264h1M171 264h1M267 264h1M300 264h1M343 264h2M376 264h1M407 264h1M409 264h1M452 264h1M485 264h1M580 264h1M627 264h1M244 265h1M253 265h1M346 265h1M348 265h1M404 265h1M406 265h1M499 265h1M73 266h1M215 266h1M322 266h1M349 266h1M351 266h1M401 266h1M403 266h1M430 266h1M487 266h1M537 266h1M679 266h1M117 267h1M174 267h1M243 267h1M255 267h1M353 267h2M356 267h1M396 267h1M398 267h2M497 267h1M578 267h1M634 267h1M263 268h1M296 268h1M357 268h1M359 268h1M361 268h1M391 268h1M393 268h2M455 268h1M488 268h2M209 269h1M243 269h1M257 269h1M341 269h1M362 269h1M364 269h1M366 269h2M369 269h1M371 269h1M373 269h2M376 269h1M378 269h2M381 269h1M383 269h2M386 269h1M388 269h2M411 269h1M495 269h1M542 269h1M76 270h1M109 270h1M177 270h1M320 270h1M432 270h1M488 270h1M575 270h1M642 270h1M675 270h1M243 271h1M259 271h1M493 271h1M293 272h1M459 272h1M101 273h1M204 273h1M243 273h1M261 273h1M340 273h1M358 273h1M393 273h1M412 273h1M488 273h1M491 273h1M548 273h1M651 273h1M179 274h1M376 274h1M573 274h1M80 275h1M243 275h1M255 275h1M263 275h1M317 275h1M434 275h1M488 275h2M497 275h1M672 275h1M199 276h1M290 276h1M462 276h1M553 276h1M93 277h1M182 277h1M243 277h1M265 277h1M486 277h1M488 277h1M570 277h1M659 277h1M338 278h1M358 278h1M394 278h1M414 278h1M193 279h1M243 279h1M251 279h1M267 279h1M315 279h1M376 279h1M437 279h1M484 279h1M501 279h1M559 279h1M84 280h1M185 280h1M270 280h1M287 280h1M465 280h1M482 280h1M488 280h1M567 280h1M668 280h1M243 281h1M247 282h1M272 282h1M480 282h1M488 282h1M505 282h1M187 283h1M243 283h1M336 283h1M357 283h1M395 283h1M415 283h1M564 283h1M75 284h1M274 284h1M284 284h1M313 284h1M376 284h1M439 284h1M468 284h1M478 284h1M488 284h1M677 284h1M88 285h1M243 285h1M276 285h1M476 285h1M664 285h1M190 286h1M242 286h1M509 286h1M562 286h1M66 287h1M182 287h1M243 287h1M278 287h1M335 287h1M356 287h1M396 287h1M417 287h1M474 287h1M488 287h1M570 287h1M686 287h1M280 288h1M310 288h1M442 288h1M471 288h1M92 289h1M193 289h1M244 289h1M376 289h1M487 289h1M559 289h1M660 289h1M176 290h1M238 290h1M283 290h1M469 290h1M514 290h1M576 290h1M56 291h1M244 291h1M285 291h1M467 291h1M487 291h1M696 291h1M196 292h1M333 292h1M355 292h1M397 292h1M419 292h1M556 292h1M244 293h1M277 293h1M287 293h1M308 293h1M444 293h1M465 293h1M475 293h1M96 294h1M170 294h1M234 294h1M289 294h1M376 294h1M463 294h1M487 294h1M518 294h1M582 294h1M656 294h1M46 295h1M199 295h1M244 295h1M553 295h1M706 295h1M292 296h1M460 296h1M486 296h1M201 297h1M245 297h1M274 297h1M294 297h1M305 297h1M332 297h1M354 297h1M397 297h1M420 297h1M446 297h1M458 297h1M478 297h1M550 297h1M100 298h1M164 298h1M229 298h1M296 298h1M456 298h1M486 298h1M522 298h1M588 298h1M652 298h1M36 299h1M245 299h1M298 299h1M376 299h1M453 299h1M716 299h1M204 300h1M245 300h1M548 300h1M270 301h1M301 301h1M451 301h1M481 301h1M486 301h1M157 302h1M225 302h1M246 302h1M303 302h1M330 302h1M354 302h1M398 302h1M422 302h1M449 302h1M527 302h1M594 302h1M25 303h1M104 303h1M207 303h1M305 303h1M446 303h1M485 303h1M545 303h1M648 303h1M727 303h1M246 304h1M308 304h1M376 304h1M444 304h1M210 305h1M267 305h1M310 305h1M442 305h1M485 305h1M542 305h1M151 306h1M220 306h1M247 306h1M301 306h1M312 306h1M328 306h1M423 306h1M439 306h1M451 306h1M531 306h1M601 306h1M108 307h1M315 307h1M353 307h1M399 307h1M437 307h1M484 307h1M644 307h1M14 308h1M213 308h1M247 308h1M317 308h1M435 308h1M539 308h1M738 308h1M320 309h1M376 309h1M432 309h1M144 310h1M216 310h1M248 310h1M264 310h1M322 310h1M324 310h1M427 310h1M430 310h1M484 310h1M488 310h1M536 310h1M607 310h1M112 311h1M298 311h1M327 311h1M425 311h1M454 311h1M640 311h1M3 312h1M248 312h1M329 312h1M352 312h1M400 312h1M423 312h1M483 312h1M749 312h1M219 313h1M332 313h1M334 313h1M418 313h1M420 313h1M533 313h1M138 314h1M249 314h1M260 314h1M336 314h1M339 314h1M376 314h1M413 314h1M415 314h1M482 314h1M491 314h1M614 314h1M116 315h1M211 315h1M222 315h1M341 315h1M410 315h1M530 315h1M541 315h1M636 315h1M249 316h1M296 316h1M325 316h1M344 316h1M346 316h1M349 316h1M403 316h1M406 316h1M408 316h1M427 316h1M456 316h1M481 316h1M351 317h1M354 317h1M398 317h1M401 317h1M131 318h1M225 318h1M250 318h1M356 318h1M359 318h1M361 318h1M364 318h1M366 318h1M386 318h1M388 318h1M391 318h1M393 318h1M396 318h1M527 318h1M621 318h1M120 319h1M206 319h1M257 319h1M368 319h1M371 319h1M373 319h1M376 319h1M378 319h1M381 319h1M383 319h1M481 319h1M495 319h1M545 319h1M632 319h1M228 320h1M251 320h1M293 320h1M459 320h1M524 320h1M252 321h1M324 321h1M428 321h1M480 321h1M231 322h1M350 322h1M401 322h1M521 322h1M124 323h1M202 323h1M252 323h2M479 323h1M498 323h1M550 323h1M628 323h1M234 324h1M376 324h1M518 324h1M253 325h1M291 325h1M461 325h1M478 325h1M128 326h1M237 326h1M322 326h1M430 326h1M515 326h1M624 326h1M117 327h1M254 327h1M350 327h1M402 327h1M477 327h1M635 327h1M197 328h1M250 328h1M502 328h1M555 328h1M240 329h1M255 329h1M376 329h1M476 329h1M512 329h1M132 330h1M288 330h1M464 330h1M620 330h1M243 331h1M256 331h1M320 331h1M432 331h1M509 331h1M109 332h1M192 332h1M246 332h1M257 332h1M349 332h1M403 332h1M475 332h1M506 332h1M560 332h1M643 332h1M136 334h1M249 334h1M257 334h1M286 334h1M376 334h1M466 334h1M474 334h1M502 334h1M616 334h1M252 336h1M258 336h1M319 336h1M433 336h1M473 336h1M499 336h1M101 337h1M140 337h1M187 337h1M243 337h1M348 337h1M404 337h1M509 337h1M565 337h1M612 337h1M650 337h1M256 338h1M259 338h1M472 338h1M496 338h1M260 339h1M283 339h1M376 339h1M469 339h1M259 340h1M471 340h1M493 340h1M144 341h1M261 341h1M317 341h1M435 341h1M608 341h1M93 342h1M181 342h1M239 342h1M262 342h1M347 342h1M405 342h1M470 342h1M490 342h1M513 342h1M570 342h1M658 342h1M263 343h1M265 343h1M487 343h1M148 344h1M280 344h1M376 344h1M468 344h1M471 344h1M603 344h1M3 345h1M264 345h1M268 345h1M484 345h1M749 345h1M265 346h1M271 346h1M315 346h1M437 346h1M467 346h1M480 346h1M85 347h1M152 347h1M176 347h1M235 347h1M346 347h1M406 347h1M517 347h1M576 347h1M599 347h1M667 347h1M266 348h1M275 348h1M466 348h1M477 348h1M278 349h1M376 349h1M474 349h1M9 350h1M267 350h1M464 350h1M743 350h1M157 351h1M268 351h1M281 351h1M314 351h1M438 351h1M463 351h1M471 351h1M595 351h1M77 352h1M171 352h1M231 352h1M284 352h1M345 352h1M406 352h1M468 352h1M521 352h1M581 352h1M675 352h1M270 353h1M287 353h1M461 353h1M464 353h1M161 354h1M271 354h1M275 354h1M376 354h1M477 354h1M591 354h1M291 355h1M460 355h2M15 356h1M272 356h1M294 356h1M312 356h1M440 356h1M458 356h1M736 356h1M165 357h1M227 357h1M297 357h1M345 357h1M407 357h1M455 357h1M458 357h1M524 357h1M587 357h1M68 358h1M274 358h1M300 358h1M452 358h1M684 358h1M272 359h1M275 359h1M304 359h1M448 359h1M457 359h1M479 359h1M169 360h1M307 360h1M376 360h1M445 360h1M455 360h1M583 360h1M22 361h1M276 361h1M310 361h1M442 361h1M730 361h1M159 362h1M223 362h1M278 362h1M313 362h1M438 362h1M454 362h1M528 362h1M593 362h1M59 363h1M173 363h1M317 363h1M344 363h1M408 363h1M435 363h1M579 363h1M693 363h1M279 364h1M320 364h1M323 364h1M429 364h1M432 364h1M452 364h1M270 365h1M281 365h1M326 365h1M376 365h1M425 365h1M450 365h1M482 365h1M28 366h1M177 366h1M282 366h1M308 366h1M330 366h1M333 366h1M419 366h1M422 366h1M444 366h1M574 366h1M724 366h1M153 367h1M219 367h1M336 367h1M416 367h1M449 367h1M532 367h1M599 367h1M182 368h1M284 368h1M340 368h1M343 368h1M409 368h1M412 368h1M447 368h1M570 368h1M50 369h1M285 369h1M346 369h1M349 369h1M353 369h1M399 369h1M402 369h1M406 369h1M702 369h1M34 370h1M267 370h1M287 370h1M356 370h1M359 370h1M363 370h1M366 370h1M369 370h1M373 370h1M376 370h1M379 370h1M383 370h1M386 370h1M389 370h1M392 370h1M396 370h1M445 370h1M485 370h1M718 370h1M186 371h1M443 371h1M566 371h1M215 372h1M289 372h1M306 372h1M445 372h1M537 372h1M147 373h1M290 373h1M342 373h1M410 373h1M442 373h1M605 373h1M190 374h1M292 374h1M440 374h1M562 374h1M40 375h1M264 375h1M488 375h1M712 375h1M194 376h1M293 376h1M376 376h1M438 376h1M558 376h1M295 377h1M305 377h1M436 377h1M447 377h1M211 378h1M297 378h1M434 378h1M541 378h1M141 379h1M198 379h1M299 379h1M341 379h1M411 379h1M553 379h1M611 379h1M46 380h1M300 380h1M432 380h1M706 380h1M203 381h1M261 381h1M302 381h1M376 381h1M430 381h1M491 381h1M549 381h1M30 382h1M304 382h1M428 382h1M722 382h1M207 383h1M303 383h1M426 383h1M449 383h1M545 383h1M52 384h1M135 384h1M306 384h1M340 384h1M412 384h1M424 384h1M617 384h1M700 384h1M308 385h1M422 385h1M211 386h1M258 386h1M310 386h1M312 386h1M420 386h1M494 386h1M541 386h1M313 387h1M376 387h1M418 387h1M19 388h1M215 388h1M301 388h1M315 388h1M416 388h1M451 388h1M537 388h1M733 388h1M58 389h1M202 389h1M317 389h1M414 389h1M549 389h1M694 389h1M128 390h1M219 390h1M319 390h1M339 390h1M412 390h2M532 390h1M624 390h1M321 391h1M410 391h1M224 392h1M255 392h1M323 392h1M325 392h1M376 392h1M408 392h1M497 392h1M528 392h1M64 393h1M327 393h1M403 393h1M406 393h1M688 393h1M228 394h1M299 394h1M329 394h1M331 394h1M401 394h1M453 394h1M524 394h1M8 395h1M198 395h1M334 395h1M336 395h1M397 395h1M399 395h1M554 395h1M744 395h1M752 395h1M232 396h1M338 396h1M340 396h1M393 396h1M395 396h1M413 396h1M520 396h1M70 397h1M121 397h1M342 397h1M344 397h1M388 397h1M390 397h1M631 397h1M682 397h1M236 398h1M252 398h1M346 398h1M348 398h1M351 398h1M353 398h1M376 398h1M379 398h1M381 398h1M384 398h1M386 398h1M500 398h1M516 398h1M297 399h1M355 399h1M357 399h1M359 399h1M362 399h1M364 399h1M366 399h1M368 399h1M370 399h1M373 399h1M375 399h1M377 399h1M455 399h1M240 400h1M511 400h1M76 401h1M193 401h1M337 401h1M414 401h1M559 401h1M676 401h1M245 402h1M507 402h1M750 402h1M114 403h1M249 403h1M503 403h1M638 403h1M376 404h1M82 405h1M253 405h1M295 405h1M457 405h1M499 405h1M670 405h1M188 407h1M257 407h1M336 407h1M415 407h1M494 407h1M563 407h1M262 408h1M490 408h1M88 409h1M107 409h1M246 409h1M506 409h1M645 409h1M664 409h1M266 410h1M376 410h1M486 410h1M748 410h1M270 411h1M293 411h1M459 411h1M482 411h1M274 412h1M478 412h1M94 413h1M184 413h1M336 413h1M416 413h1M568 413h1M658 413h1M278 414h1M473 414h1M242 415h1M283 415h1M469 415h1M509 415h1M100 416h1M287 416h1M376 416h1M465 416h1M652 416h1M291 417h1M461 417h1M746 417h1M295 418h1M456 418h1M300 419h1M335 419h1M417 419h1M452 419h1M105 420h1M179 420h1M304 420h1M448 420h1M573 420h1M646 420h1M308 421h1M444 421h1M239 422h1M312 422h1M376 422h1M439 422h1M513 422h1M92 423h1M111 423h1M289 423h1M317 423h1M435 423h1M463 423h1M641 423h1M660 423h1M321 424h1M325 424h1M427 424h1M431 424h1M743 424h1M329 425h1M334 425h1M418 425h1M423 425h1M174 426h1M338 426h1M342 426h1M410 426h1M414 426h1M578 426h1M117 427h1M346 427h1M350 427h1M355 427h1M397 427h1M401 427h1M406 427h1M635 427h1M236 428h1M359 428h1M363 428h1M367 428h1M372 428h1M376 428h1M380 428h1M384 428h1M389 428h1M393 428h1M516 428h1M123 430h1M287 430h1M465 430h1M629 430h1M84 431h1M668 431h1M740 431h1M333 432h1M419 432h1M129 433h1M168 433h1M584 433h1M623 433h1M376 434h1M232 435h1M520 435h1M134 436h1M285 436h1M467 436h1M617 436h1M75 438h1M331 438h1M420 438h1M676 438h1M738 438h1M140 439h1M612 439h1M163 440h1M589 440h1M229 441h1M376 441h1M523 441h1M146 442h1M606 442h1M283 443h1M469 443h1M152 445h1M330 445h1M421 445h1M600 445h1M67 446h1M685 446h1M735 446h1M157 447h1M376 447h1M595 447h1M225 448h1M527 448h1M280 449h1M471 449h1M163 450h1M589 450h1M329 451h1M422 451h1M169 452h1M583 452h1M732 453h1M58 454h1M376 454h1M694 454h1M152 455h1M174 455h1M221 455h1M531 455h1M578 455h1M600 455h1M278 456h1M474 456h1M180 457h1M572 457h1M328 458h1M424 458h1M186 460h1M566 460h1M729 460h1M376 461h1M146 462h1M191 462h1M217 462h1M534 462h1M561 462h1M606 462h1M48 463h1M276 463h1M476 463h1M703 463h1M197 464h1M555 464h1M327 465h1M425 465h1M202 466h1M550 466h1M725 466h1M208 468h1M376 468h1M544 468h1M139 470h1M213 470h1M273 470h1M479 470h1M538 470h1M612 470h1M38 472h1M219 472h1M326 472h1M426 472h1M533 472h1M713 472h1M722 473h1M224 474h1M527 474h1M230 475h1M376 475h1M522 475h1M235 477h1M516 477h1M209 478h1M271 478h1M481 478h1M542 478h1M133 479h1M241 479h1M325 479h1M427 479h1M511 479h1M619 479h1M246 480h1M505 480h1M718 480h1M28 481h1M252 481h1M500 481h1M724 481h1M376 482h1M257 483h1M494 483h1M263 484h1M489 484h1M268 485h1M484 485h1M205 486h1M547 486h1M126 487h1M274 487h1M324 487h1M428 487h1M478 487h1M625 487h1M715 487h1M279 488h1M473 488h1M285 489h1M467 489h1M290 490h1M376 490h1M462 490h1M17 491h1M295 491h1M456 491h1M734 491h1M301 492h1M306 492h1M446 492h1M451 492h1M266 493h1M312 493h1M440 493h1M486 493h1M711 493h1M201 494h1M317 494h1M322 494h1M430 494h1M435 494h1M551 494h1M328 495h1M333 495h1M419 495h1M424 495h1M119 496h1M338 496h1M344 496h1M408 496h1M413 496h1M632 496h1M349 497h1M354 497h1M360 497h1M365 497h1M371 497h1M376 497h1M381 497h1M387 497h1M392 497h1M397 497h1M403 497h1M707 500h1M6 501h1M263 501h1M489 501h1M746 501h1M196 502h1M321 502h1M431 502h1M556 502h1M15 505h1M112 505h1M376 505h1M639 505h1M737 505h1M703 506h1M23 509h1M728 509h1M260 510h1M320 510h1M432 510h1M492 510h1M192 511h1M560 511h1M0 513h1M32 513h1M376 513h1M699 513h1M720 513h1M105 515h1M647 515h1M40 516h1M712 516h1M257 518h1M495 518h1M4 519h1M318 519h1M433 519h1M695 519h1M49 520h1M187 520h1M565 520h1M703 520h1M376 522h1M57 523h1M695 523h1M8 525h1M97 525h1M655 525h1M690 525h1M65 526h1M687 526h1M254 527h1M317 527h1M435 527h1M497 527h1M73 529h1M182 529h1M570 529h1M679 529h1M12 530h1M376 530h1M686 531h1M81 533h1M671 533h1M89 535h1M663 535h1M16 536h1M251 536h1M315 536h1M436 536h1M501 536h1M681 537h1M97 538h1M655 538h1M177 539h1M376 539h1M575 539h1M20 541h1M105 541h1M647 541h1M677 543h1M112 544h1M639 544h1M248 545h1M314 545h1M438 545h1M504 545h1M25 546h1M80 546h1M120 546h1M632 546h1M671 546h1M376 548h1M128 549h1M171 549h1M581 549h1M624 549h1M672 549h1M136 551h1M616 551h1M29 552h1M143 553h1M609 553h1M245 555h1M312 555h1M439 555h1M507 555h1M667 555h1M151 556h1M601 556h1M33 557h1M72 558h1M158 558h1M376 558h1M594 558h1M680 558h1M166 560h1M586 560h1M662 560h1M38 562h1M173 562h1M579 562h1" stroke="#0b86dd" stroke-width="1" fill="none" transform="translate(0,0.5)"/>
<path d="M367 203h2M370 203h3M374 203h2M377 203h2M380 203h3M384 203h2M361 204h2M364 204h2M387 204h3M391 204h1M357 205h2M360 205h1M392 205h1M394 205h2M353 206h3M396 206h1M398 206h2M350 207h2M401 207h2M347 208h1M349 208h1M403 208h1M405 208h1M345 209h2M406 209h2M343 210h1M409 210h2M341 211h2M411 211h1M338 212h2M412 212h1M414 212h1M337 213h1M415 213h1M336 214h1M416 214h2M333 215h2M419 215h1M332 216h1M420 216h1M331 217h1M421 217h2M330 218h1M423 218h1M327 219h1M329 219h1M424 219h1M326 220h1M426 220h1M325 221h1M427 221h1M324 222h1M428 222h1M323 223h1M429 223h1M322 224h1M372 224h10M430 224h1M321 225h1M365 225h7M382 225h7M431 225h2M320 226h1M361 226h4M389 226h4M433 226h1M319 227h1M358 227h3M393 227h3M434 227h1M318 228h1M355 228h3M396 228h3M317 229h1M352 229h3M399 229h2M435 229h1M316 230h1M350 230h2M401 230h2M436 230h1M315 231h1M348 231h2M403 231h2M437 231h1M314 232h1M347 232h1M405 232h2M438 232h1M313 233h1M345 233h2M407 233h1M439 233h1M344 234h1M408 234h2M440 234h1M312 235h1M342 235h2M409 235h2M440 235h1M311 236h1M341 236h1M411 236h2M441 236h1M311 237h1M340 237h1M413 237h1M442 237h1M310 238h1M338 238h2M413 238h2M443 238h1M309 239h1M338 239h1M415 239h1M308 240h1M336 240h2M416 240h1M444 240h1M335 241h1M417 241h1M444 241h1M308 242h1M335 242h1M418 242h1M445 242h1M307 243h1M333 243h2M419 243h1M446 243h1M306 244h1M332 244h1M420 244h1M305 245h1M332 245h1M421 245h1M447 245h1M330 246h2M421 246h2M447 246h1M305 247h1M330 247h1M423 247h1M448 247h1M304 248h1M329 248h1M423 248h1M449 248h1M303 249h1M329 249h1M424 249h1M303 250h1M328 250h1M424 250h1M449 250h1M327 251h2M425 251h1M450 251h1M302 252h1M326 252h1M426 252h1M450 252h1M302 253h1M326 253h1M426 253h1M451 253h1M301 254h1M325 254h1M427 254h1M325 255h1M427 255h1M451 255h1M301 256h1M324 256h1M428 256h1M452 256h1M300 257h1M324 257h1M372 257h6M428 257h1M452 257h1M300 258h1M324 258h1M367 258h5M378 258h6M429 258h1M323 259h1M364 259h3M383 259h4M429 259h1M453 259h1M299 260h1M322 260h2M361 260h3M386 260h3M430 260h1M453 260h1M299 261h1M322 261h1M360 261h2M388 261h3M430 261h1M454 261h1M299 262h1M322 262h1M358 262h2M390 262h2M431 262h1M321 263h1M357 263h2M392 263h2M431 263h1M454 263h1M298 264h1M321 264h1M356 264h1M393 264h2M431 264h1M454 264h1M298 265h1M321 265h1M354 265h2M394 265h2M432 265h1M455 265h1M298 266h1M320 266h1M353 266h2M396 266h1M432 266h1M320 267h1M352 267h2M397 267h1M432 267h1M455 267h1M297 268h1M320 268h1M352 268h1M397 268h2M433 268h1M455 268h1M297 269h1M320 269h1M351 269h1M398 269h2M433 269h1M319 270h1M350 270h1M399 270h1M433 270h1M455 270h1M297 271h1M319 271h1M349 271h1M400 271h1M433 271h1M456 271h1M297 272h1M319 272h1M349 272h1M400 272h2M433 272h1M456 272h1M296 273h1M319 273h1M348 273h1M401 273h1M434 273h1M319 274h1M347 274h2M402 274h1M434 274h1M456 274h1M296 275h1M318 275h1M347 275h1M402 275h1M434 275h1M456 275h1M296 276h1M318 276h1M346 276h2M402 276h2M434 276h1M318 277h1M346 277h1M403 277h1M434 277h1M456 277h1M296 278h1M318 278h1M346 278h1M403 278h1M434 278h1M456 278h1M296 279h1M318 279h1M346 279h1M403 279h2M434 279h1M456 279h1M296 280h1M318 280h1M345 280h1M404 280h1M434 280h1M318 281h1M345 281h1M404 281h1M434 281h1M457 281h1M296 282h1M318 282h1M345 282h1M404 282h1M434 282h1M457 282h1M296 283h1M318 283h1M344 283h2M405 283h1M434 283h1M318 284h1M344 284h1M405 284h1M434 284h1M457 284h1M296 285h1M318 285h1M344 285h1M405 285h1M434 285h1M457 285h1M296 286h1M318 286h1M344 286h1M405 286h1M434 286h1M457 286h1M296 287h1M318 287h1M344 287h1M405 287h1M434 287h1M318 288h1M344 288h1M405 288h1M434 288h1M456 288h1M296 289h1M318 289h1M344 289h1M405 289h1M434 289h1M456 289h1M296 290h1M344 290h1M405 290h1M434 290h1M319 291h1M344 291h1M405 291h1M434 291h1M456 291h1M296 292h1M319 292h1M344 292h1M405 292h1M433 292h1M456 292h1M296 293h1M319 293h1M344 293h1M405 293h1M433 293h1M456 293h1M297 294h1M319 294h1M344 294h2M404 294h1M433 294h1M319 295h1M345 295h1M404 295h1M433 295h1M456 295h1M297 296h1M320 296h1M345 296h1M404 296h1M433 296h1M456 296h1M297 297h1M320 297h1M345 297h1M404 297h1M432 297h1M455 297h1M320 298h1M345 298h2M403 298h2M432 298h1M297 299h1M321 299h1M346 299h1M403 299h1M432 299h1M455 299h1M298 300h1M321 300h1M346 300h1M403 300h1M432 300h1M455 300h1M298 301h1M321 301h1M346 301h2M402 301h1M431 301h1M322 302h1M347 302h1M402 302h1M431 302h1M454 302h1M298 303h1M322 303h1M347 303h2M401 303h1M431 303h1M454 303h1M299 304h1M322 304h1M348 304h1M401 304h1M430 304h1M454 304h1M299 305h1M323 305h1M348 305h2M400 305h1M430 305h1M323 306h1M349 306h1M399 306h2M429 306h1M453 306h1M299 307h1M323 307h1M350 307h1M399 307h1M429 307h1M453 307h1M300 308h1M324 308h1M350 308h2M398 308h1M428 308h2M453 308h1M300 309h1M324 309h1M351 309h2M397 309h1M428 309h1M325 310h1M352 310h2M396 310h1M427 310h1M452 310h1M301 311h1M325 311h1M353 311h2M395 311h1M427 311h1M452 311h1M301 312h1M326 312h1M354 312h2M394 312h1M426 312h1M451 312h1M302 313h1M327 313h1M355 313h2M393 313h1M426 313h1M451 313h1M327 314h1M357 314h2M391 314h2M425 314h1M302 315h1M328 315h1M358 315h2M389 315h3M424 315h2M450 315h1M303 316h1M329 316h1M360 316h2M387 316h3M423 316h1M450 316h1M303 317h1M329 317h2M362 317h2M385 317h3M423 317h1M449 317h1M304 318h1M330 318h1M364 318h3M382 318h4M422 318h1M331 319h1M367 319h16M421 319h2M448 319h1M305 320h1M332 320h1M420 320h1M448 320h1M305 321h1M332 321h2M420 321h1M447 321h1M306 322h1M334 322h1M418 322h2M447 322h1M307 323h1M334 323h1M418 323h1M446 323h1M335 324h2M417 324h1M307 325h1M337 325h1M415 325h2M445 325h1M308 326h1M337 326h2M415 326h1M444 326h1M309 327h1M339 327h1M413 327h2M444 327h1M309 328h1M340 328h1M412 328h1M443 328h1M310 329h1M341 329h2M411 329h1M442 329h1M311 330h1M343 330h1M409 330h2M441 330h1M344 331h2M407 331h2M441 331h1M312 332h1M345 332h2M406 332h2M313 333h1M347 333h2M404 333h2M440 333h1M314 334h1M349 334h2M402 334h2M439 334h1M314 335h1M351 335h2M400 335h2M438 335h1M315 336h1M353 336h2M398 336h3M437 336h1M316 337h1M355 337h3M395 337h3M436 337h1M317 338h1M358 338h3M392 338h3M435 338h1M318 339h1M361 339h5M388 339h4M434 339h1M319 340h1M366 340h9M379 340h9M433 340h1M320 341h1M375 341h4M432 341h1M321 342h1M431 342h1M322 343h1M430 343h1M323 344h1M429 344h1M324 345h1M427 345h2M325 346h2M426 346h1M328 347h1M425 347h1M329 348h1M424 348h1M330 349h1M423 349h1M331 350h2M421 350h2M333 351h1M419 351h1M334 352h1M418 352h1M336 353h2M416 353h2M338 354h1M415 354h1M339 355h2M412 355h2M342 356h2M410 356h2M344 357h1M407 357h2M345 358h1M347 358h1M405 358h2M348 359h2M402 359h2M351 360h3M399 360h1M401 360h1M355 361h3M395 361h1M397 361h2M359 362h3M390 362h2M393 362h2M363 363h3M367 363h3M382 363h2M385 363h3M389 363h1M371 364h2M374 364h3M378 364h3" stroke="#0a98ff" stroke-width="1" fill="none" transform="translate(0,0.5)"/>
<path d="M382 282h1M385 282h1M388 282h1M391 282h1M394 282h1M397 282h1M400 282h1M403 282h1M406 282h1M409 282h1M412 282h1M415 282h1M418 282h1M421 282h1M424 282h1M427 282h1M430 282h1M433 282h1M436 282h1M439 282h1M442 282h1M445 282h1M448 282h1M451 282h1M454 282h1M457 282h1M460 282h1M463 282h1M466 282h1M469 282h1M472 282h1M475 282h1M478 282h1M481 282h1M484 282h1M487 282h1M490 282h1M493 282h1M496 282h1M499 282h1M502 282h1M505 282h1M508 282h1M511 282h1M514 282h1M517 282h1M520 282h1M523 282h1M526 282h1M529 282h1M532 282h1M535 282h1M538 282h1M541 282h1M544 282h1M547 282h1M550 282h1M553 282h1M556 282h1M559 282h1M562 282h1M565 282h1M568 282h1M571 282h1M574 282h1M577 282h1M580 282h1M583 282h1M586 282h1M589 282h1M592 282h1M595 282h1M598 282h1M601 282h1M604 282h1M607 282h1M610 282h1M613 282h1M616 282h1M619 282h1M622 282h1M625 282h1M628 282h1M631 282h1M634 282h1M637 282h1M640 282h1M643 282h1M646 282h1M649 282h1M652 282h1M655 282h1M658 282h1M661 282h1M664 282h1M667 282h1M670 282h1M673 282h1M676 282h1M679 282h1M682 282h1M685 282h1M688 282h1M691 282h1M694 282h1M697 282h1M700 282h1M703 282h1M706 282h1M709 282h1M712 282h1M715 282h1M718 282h1M721 282h1M724 282h1M727 282h1M730 282h1M733 282h1M736 282h1M739 282h1M742 282h1M745 282h1M748 282h1M751 282h1" stroke="#f0a090" stroke-width="1" fill="none" transform="translate(0,0.5)"/>
<path d="M2 282h1M13 282h1M24 282h1M35 282h1M46 282h1M57 282h1M68 282h1M79 282h1M90 282h1M101 282h1M112 282h1M123 282h1M134 282h1M145 282h1M156 282h1M167 282h1M178 282h1M189 282h1M200 282h1M211 282h1M222 282h1M233 282h1M244 282h1M255 282h1M266 282h1M277 282h1M288 282h1M299 282h1M310 282h1M321 282h1M332 282h1M343 282h1M354 282h1M365 282h1" stroke="#c86060" stroke-width="1" fill="none" transform="translate(0,0.5)"/>
<path d="M376 0h1M376 3h1M376 6h1M376 9h1M376 12h1M376 15h1M376 17h1M376 20h1M376 23h1M376 26h1M376 29h1M376 32h1M376 35h1M376 38h1M376 41h1M376 44h1M376 46h1M376 49h1M376 52h1M376 55h1M376 58h1M376 61h1M376 64h1M376 67h1M376 70h1M376 73h1M376 75h1M376 78h1M376 81h1M376 84h1M376 87h1M376 90h1M376 93h1M376 96h1M376 99h1M376 102h1M376 104h1M376 107h1M376 110h1M376 113h1M376 116h1M376 119h1M376 122h1M376 125h1M376 128h1M376 131h1M376 133h1M376 136h1M376 139h1M376 142h1M376 145h1M376 148h1M376 151h1M376 154h1M376 157h1M376 160h1M376 162h1M376 165h1M376 168h1M376 171h1M376 174h1M376 177h1M376 180h1M376 183h1M376 186h1M376 189h1M376 191h1M376 194h1M376 197h1M376 200h1M376 203h1M376 206h1M376 209h1M376 212h1M376 215h1M376 218h1M376 220h1M376 223h1M376 226h1M376 229h1M376 232h1M376 235h1M376 238h1M376 241h1M376 244h1M376 247h1M376 249h1M376 252h1M376 255h1M376 257h1M376 258h1M376 260h1M376 261h1M376 262h1M376 263h1M376 265h1M376 266h1M376 267h1M376 268h1M376 270h1M376 271h1M376 272h1M376 273h1M376 275h1M376 276h1M376 277h1M376 287h1M376 290h1M376 293h1M376 296h1M376 299h1M376 302h1M376 305h1M376 308h1M376 312h1M376 315h1M376 318h1M376 321h1M376 324h1M376 328h1M376 331h1M376 334h1M376 338h1M376 341h1M376 345h1M376 348h1M376 352h1M376 356h1M376 359h1M376 363h1M376 367h1M376 371h1M376 376h1M376 380h1M376 385h1M376 389h1M376 394h1M376 399h1M376 404h1M376 409h1M376 415h1M376 420h1M376 426h1M376 432h1M376 439h1M376 446h1M376 453h1M376 460h1M376 468h1M376 476h1M376 485h1M376 494h1M376 504h1M376 515h1M376 526h1M376 538h1" stroke="#d06a6a" stroke-width="1" fill="none" transform="translate(0,0.5)"/>
<path d="M489 5h1M505 6h1M429 8h1M422 12h1M362 14h1M322 27h1M93 30h1M449 31h1M429 34h1M387 37h1M404 40h1M367 43h1M433 44h1M624 45h1M264 47h1M731 47h1M386 48h1M153 52h1M431 58h1M409 60h1M237 74h1M305 74h1M239 80h1M339 82h1M235 85h1M469 87h1M468 97h1M414 100h1M336 101h1M331 102h1M165 103h1M654 106h1M310 112h1M468 114h1M362 119h1M316 125h1M675 133h1M698 134h1M127 137h1M540 138h1M567 138h1M500 142h1M374 145h1M262 146h1M455 146h1M673 146h1M175 150h1M411 154h1M564 154h1M405 156h1M443 159h1M571 160h1M583 164h1M266 181h1M106 183h1M526 189h1M741 195h1M583 197h1M665 197h1M566 201h1M585 202h1M531 205h1M554 207h1M543 211h1M608 212h1M79 218h1M601 218h1M625 219h1M636 219h1M525 228h1M539 230h1M562 230h1M25 233h1M12 234h1M717 236h1M686 239h1M617 247h1M705 253h1M100 254h1M705 256h1M621 265h1M538 268h1M588 270h1M618 271h1M723 282h1M215 294h1M627 294h1M640 294h1M545 300h1M643 301h1M67 307h1M514 307h1M505 309h1M608 315h1M536 316h1M588 316h1M748 317h1M41 322h1M220 328h1M215 330h1M502 336h1M78 338h1M128 366h1M47 368h1M147 374h1M181 374h1M238 375h1M130 386h1M751 402h1M9 412h1M323 412h1M295 414h1M83 428h1M387 433h1M60 440h1M256 445h1M140 451h1M600 454h1M15 461h1M311 463h1M456 465h1M134 477h1M200 487h1M281 487h1M209 498h1M254 501h1M584 507h1M593 508h1M590 513h1M95 520h1M214 523h1M310 535h1M340 560h1M340 563h1" stroke="#b4b4b4" stroke-width="1" fill="none" transform="translate(0,0.5)"/>
<path d="M192 6h1M285 7h1M50 9h1M335 34h1M570 66h1M220 98h1M600 100h1M501 111h1M316 120h1M375 136h1M50 175h1M257 237h1M454 237h1M97 255h1M316 319h1M95 331h1M492 347h1M738 370h1M703 391h1M685 395h1M506 403h1M605 425h1M194 435h1M241 467h1M331 472h1M340 482h1M651 483h1" stroke="#808080" stroke-width="1" fill="none" transform="translate(0,0.5)"/>
<path d="M532 6h1M386 16h1M563 39h1M752 42h1M720 63h1M69 78h1M546 89h1M652 103h1M336 107h1M234 128h1M620 144h1M586 152h1M70 171h1M567 193h1M11 207h1M625 215h1M315 216h1M662 216h1M517 218h1M84 265h1M482 281h1M139 288h1M212 299h1M451 438h1M296 446h1M586 449h1M18 467h1M469 469h1M296 481h1M74 488h1M597 516h1M444 520h1M65 525h1" stroke="#5e5e5e" stroke-width="1" fill="none" transform="translate(0,0.5)"/>
<path d="M234 8h1M322 19h1M262 46h1M31 82h1M44 107h1M134 153h1M344 156h1M715 156h1M532 177h1M448 223h1M482 228h1M655 235h1M95 270h1M82 288h1M390 290h1M568 301h1M735 302h1M283 320h1M650 323h1M67 328h1M336 355h1M16 358h1M60 360h1M301 477h1M405 502h1M160 507h1M211 517h1M160 522h1M353 552h1" stroke="#4a4a4a" stroke-width="1" fill="none" transform="translate(0,0.5)"/>
<path d="M751 11h1M367 16h1M657 23h1M158 75h1M429 174h1M625 217h1M63 266h1M452 271h1M107 345h1M349 367h1M721 386h1M179 397h1M197 405h1M662 410h1M331 475h1M630 478h1M554 507h1M316 510h1M516 516h1M406 534h1M650 549h1" stroke="#6e6e6e" stroke-width="1" fill="none" transform="translate(0,0.5)"/>
<path d="M321 225h1M321 226h1M320 227h1M319 229h1M319 230h1M318 231h1M318 233h1M317 234h1M317 235h1M316 237h1M316 238h1M315 239h1M315 241h1M315 242h1M314 244h1M314 245h1M314 247h1M314 248h1M313 249h1M313 251h1M313 252h1M313 254h1M313 255h1M313 257h1M313 258h1M313 259h1M313 261h1M313 262h1M313 264h1M313 265h1M313 267h1M313 268h1M313 269h1M314 271h1M314 272h1M314 274h1M314 275h1M314 277h1M315 278h1M315 279h1M315 281h1M316 282h1M316 284h1M316 285h1M317 287h1M317 288h1M317 289h1M318 291h1M318 292h1M319 294h1M319 295h1M320 296h1M320 298h1M320 299h1M321 300h1M321 302h1M322 303h1M323 305h1M323 306h1M324 307h1M324 309h1M325 310h1M325 311h1M326 313h1M327 314h1M327 315h1M328 317h1M328 318h1M329 319h1M330 321h1M330 322h1M331 323h1M332 324h1M332 326h1M333 327h1M334 328h1M335 330h1M335 331h1M336 332h1M337 333h1M338 335h1M338 336h1M339 337h1M340 338h1M341 340h1M341 341h1M342 342h1M343 343h1M344 345h1M345 346h1M345 347h1M346 348h1M347 350h1M348 351h1M349 352h1M350 353h1M350 354h1M351 356h1M352 357h1M353 358h1M354 359h1M355 360h1M356 362h1M357 363h1M358 364h1M359 365h1M359 366h1M360 367h1M361 368h1M362 370h1M363 371h1M364 372h1M365 373h1M366 374h1M367 375h1M368 376h1M369 378h1M370 379h1M371 380h1M372 381h1M373 382h1M374 383h1M375 384h1M376 385h1M377 386h1M378 387h1M379 389h1M380 390h1M381 391h1M382 392h1M383 393h1M384 394h1M385 395h1M386 396h1M387 397h1M389 398h1M390 399h1M391 401h1M392 402h1M393 403h1M394 404h1M396 405h1M397 406h1M398 407h1M399 408h1M401 410h1M402 411h1M403 412h1M404 413h1M406 414h1M407 415h1M409 417h1M410 418h1M411 419h1M413 420h1M414 421h1M416 422h1M417 424h1M418 425h1M420 426h1M421 427h1M423 428h1M425 430h1M426 431h1M428 432h1M429 433h1M431 434h1M432 435h1M434 437h1M436 438h1M437 439h1M439 440h1M441 441h1M443 443h1M444 444h1M446 445h1M448 446h1M450 447h1M451 449h1M453 450h1M455 451h1M457 452h1M459 453h1M461 454h1M463 456h1M465 457h1M467 458h1M469 459h1M471 460h1M473 461h1M475 462h1M477 464h1M479 465h1M481 466h1M483 467h1M485 468h1M487 469h1M489 470h1M492 471h1M494 472h1M496 473h1M498 474h1M500 475h1M503 476h1M505 477h1M507 478h1M509 479h1M512 480h1M514 481h1M516 482h1M519 483h1M521 484h1M523 485h1M526 486h1M528 486h1M531 487h1M533 488h1M535 489h1M538 490h1M540 490h1M543 491h1M545 492h1M548 492h1M550 493h1M553 493h1M555 494h1M558 495h1M560 495h1M563 496h1M565 496h1M568 496h1M570 497h1M572 497h1M575 497h1M577 498h1" stroke="#7e7e7e" stroke-width="1" fill="none" transform="translate(0,0.5)"/>
<path d="M321 225h1M320 226h1M320 227h1M320 228h1M319 229h1M319 230h1M318 231h1M318 232h1M317 233h1M317 234h1M316 235h2M316 236h1M316 237h1M316 238h1M315 239h1M315 240h1M315 241h1M315 242h1M314 243h1M314 244h1M314 245h1M314 246h1M314 247h1M313 248h1M313 249h1M313 250h1M313 251h1M313 252h1M313 253h1M313 254h1M313 255h1M313 256h1M313 257h1M313 258h1M313 259h1M313 260h1M313 261h1M313 262h1M313 263h1M313 264h1M313 265h1M313 266h1M313 267h1M313 268h1M313 269h1M313 270h2M314 271h1M314 272h1M314 273h1M314 274h1M314 275h1M314 276h1M314 277h2M315 278h1M315 279h1M315 280h1M315 281h1M315 282h1M316 283h1M316 284h1M316 285h1M316 286h2M317 287h1M317 288h1M317 289h1M317 290h2M318 291h1M318 292h1M318 293h1M319 294h1M319 295h1M319 296h1M319 297h2M320 298h1M320 299h1M321 300h1M321 301h1M321 302h2M322 303h1M322 304h1M322 305h2M323 306h1M323 307h2M324 308h1M324 309h2M325 310h1M325 311h1M325 312h2M326 313h1M326 314h1M327 315h1M327 316h2M328 317h1M328 318h1M329 319h1M329 320h2M330 321h1M330 322h2M331 323h1M332 324h1M332 325h1M332 326h2M333 327h1M334 328h1M334 329h1M334 330h2M335 331h2M336 332h1M336 333h2M337 334h1M337 335h2M338 336h2M339 337h1M339 338h2M340 339h1M340 340h2M341 341h2M342 342h1M343 343h1M343 344h1M343 345h2M344 346h2M345 347h1M346 348h1M346 349h2M347 350h2M348 351h1M348 352h2M349 353h1M349 354h2M350 355h2M351 356h2M352 357h2M353 358h2M354 359h1M354 360h2M354 361h2M355 362h2M356 363h2M357 364h2M358 365h2M359 366h1M359 367h2M360 368h2M361 369h2M362 370h2M363 371h2M364 372h2M365 373h2M365 374h2M366 375h2M366 376h3M367 377h3M368 378h1M370 378h1M369 379h1M371 379h1M370 380h1M372 380h1M371 381h1M373 381h1M371 382h1M374 382h1M372 383h2M373 384h1M375 384h1M374 385h1M376 385h1M375 386h1M377 386h1M376 387h1M378 387h1M377 388h1M379 388h1M378 389h1M380 389h1M379 390h1M381 390h1M380 391h1M382 391h1M381 392h3M383 393h2M383 394h3M384 395h1M386 395h1M385 396h1M387 396h1M386 397h1M387 398h2M388 399h2M389 400h2M390 401h1M392 401h1M390 402h1M392 402h2M392 403h1M394 403h1M393 404h1M395 404h1M394 405h1M396 405h1M395 406h1M398 406h1M396 407h1M398 408h2M398 409h3M399 410h3M400 411h1M403 411h1M402 412h1M404 412h1M403 413h1M405 413h1M404 414h1M407 414h1M405 415h1M405 416h1M407 416h2M407 417h1M409 417h1M408 418h1M411 418h1M410 419h1M412 419h1M411 420h1M413 420h1M412 421h1M415 421h1M412 422h1M414 422h1M414 423h1M416 423h1M415 424h1M418 424h1M417 425h1M419 425h1M418 426h1M421 426h1M418 427h1M420 427h1M422 427h1M420 428h2M424 428h1M421 429h1M423 430h1M425 430h1M424 431h1M427 431h1M426 432h1M428 432h1M426 433h1M428 433h1M430 433h1M428 434h1M432 434h1M429 435h1M433 435h1M431 436h1M432 437h1M435 437h1M433 438h2M437 438h1M434 439h1M438 439h1M436 440h1M440 440h1M437 441h2M442 441h1M439 442h1M439 443h1M441 443h1M443 443h1M441 444h1M443 444h1M445 444h1M443 445h1M447 445h1M444 446h2M449 446h1M446 447h1M450 447h1M446 448h1M448 448h1M452 448h1M448 449h1M450 449h1M450 450h1M454 450h1M452 451h1M456 451h1M454 452h1M458 452h1M454 453h2M460 453h1M456 454h2M462 454h1M458 455h1M463 455h1M459 456h2M465 456h1M461 457h1M462 458h2M467 458h1M463 459h1M465 459h1M469 459h1M465 460h1M467 460h1M471 460h1M468 461h1M473 461h1M469 462h2M475 462h1M471 463h1M477 463h1M472 464h2M479 464h1M474 465h2M482 465h1M476 466h2M484 466h1M478 467h1M486 467h1M480 468h1M482 469h1M488 469h1M482 470h1M484 470h1M490 470h1M484 471h1M486 471h1M492 471h1M486 472h1M488 472h1M494 472h1M489 473h2M497 473h1M491 474h1M493 474h1M499 474h1M493 475h1M495 475h1M501 475h1M503 476h1M495 477h1M497 477h1M505 477h1M498 478h2M508 478h1M510 478h1M500 479h1M502 479h1M512 479h1M502 480h1M504 480h1M515 480h1M505 481h2M517 481h1M507 482h1M509 482h1M519 482h1M509 483h1M511 483h1M522 483h1M512 484h2M524 484h1M514 485h1M516 485h1M526 485h1M529 485h1M516 486h1M518 486h1M531 486h1M519 487h1M521 487h1M533 487h1M521 488h1M523 488h1M536 488h1M538 488h1M524 489h2M541 489h1M526 490h1M528 490h1M543 490h1M545 490h1M529 491h2M533 491h1M548 491h1M550 491h1M531 492h1M535 492h1M553 492h1M534 493h1M538 493h1M555 493h1M558 493h1M560 493h1M536 494h1M540 494h1M563 494h1M565 494h1M539 495h1M541 495h1M543 495h1M567 495h1M570 495h1M572 495h1M544 496h2M548 496h1M575 496h1M546 497h1M551 497h1M549 498h1M552 498h2M556 498h1M554 499h1M558 499h1M557 500h1M559 500h1M561 500h1M563 500h1M562 501h1M566 501h1M568 501h1M565 502h1M567 502h1M571 502h1M574 502h1M570 503h1M572 503h1M576 503h1M579 503h1M581 503h1M575 504h1M578 504h1M580 505h1M583 505h1" stroke="#75750a" stroke-width="1" fill="none" transform="translate(0,0.5)"/>
<path d="M377 193h1M379 193h2M382 193h2M385 193h2M388 193h2M391 193h2M394 193h3M398 193h2M401 193h2M404 193h2M370 194h1M372 194h2M375 194h2M407 194h2M410 194h2M413 194h1M364 195h1M366 195h2M369 195h1M414 195h1M416 195h2M419 195h2M362 196h2M421 196h1M423 196h2M357 197h1M359 197h2M426 197h2M429 197h2M355 198h2M432 198h3M352 199h2M436 199h2M349 200h1M351 200h1M439 200h2M442 200h1M348 201h1M443 201h1M445 201h1M345 202h1M347 202h1M446 202h1M448 202h1M344 203h1M450 203h2M343 204h1M453 204h2M340 205h2M456 205h1M458 205h1M339 206h1M459 206h1M461 206h1M338 207h1M463 207h1M337 208h1M464 208h1M466 208h1M334 209h1M336 209h1M468 209h1M333 210h1M470 210h2M332 211h1M473 211h1M331 212h1M475 212h1M330 213h1M477 213h1M479 213h1M329 214h1M480 214h1M328 215h1M482 215h1M484 216h1M327 217h1M486 217h1M326 218h1M488 218h1M325 219h1M490 219h1M492 219h1M324 220h1M494 220h1M324 221h1M496 221h1M323 222h1M498 222h1M500 223h1M322 224h1M502 224h1M504 225h1M506 227h1M508 228h1M510 229h1M512 230h1M514 231h1M516 232h1M518 234h1M520 235h1M523 236h1M525 237h1M527 239h1M529 240h1M531 241h1M533 243h1M536 244h1M538 246h1M540 247h1M542 249h1M544 250h1M547 252h1M549 253h1M551 255h1M553 257h1M556 258h1M558 260h1M560 262h1M563 264h1M565 265h1M567 267h1M569 269h1M572 271h1M574 273h1M576 275h1M579 277h1M581 279h1M583 281h1M585 283h1M588 285h1M590 287h1M592 289h1M594 291h1M597 294h1M599 296h1M601 298h1M603 300h1M606 303h1M608 305h1M610 307h1M612 310h1M614 312h1M616 314h1M618 317h1M620 319h1M622 322h1M625 324h1M627 327h1M628 329h1M630 332h1M632 334h1M634 337h1M636 340h1M638 342h1M640 345h1M641 347h1M643 350h1M645 353h1M646 355h1M648 358h1M650 361h1M651 364h1M653 366h1M654 369h1M655 372h1M657 374h1M658 377h1M659 380h1M660 383h1M662 385h1M663 388h1M664 391h1M665 393h1M666 396h1M666 399h1M667 401h1M668 404h1M669 407h1M669 409h1M670 412h1M670 414h1M671 417h1M671 419h1M671 422h1M672 425h1M672 427h1M672 429h1M672 432h1M672 434h1M672 437h1M672 439h1M672 441h1M671 443h1M671 446h1M670 448h1M670 450h1M669 452h1M669 454h1M668 456h1M668 458h1M667 460h1M666 462h1M665 464h1M664 466h1M663 467h1M662 469h1M661 471h1M660 472h1M658 474h1M657 476h1M656 477h1M654 478h1M653 480h1M651 481h1M650 482h1M648 484h1M646 485h1M645 486h1M643 487h1M641 488h1M639 489h1M638 490h1M634 491h1M636 491h1M632 492h1M630 493h1M626 494h1M628 494h1M622 495h1M624 495h1M618 496h1M620 496h1M613 497h1M615 497h1M580 498h1M582 498h1M585 498h1M587 498h1M602 498h1M604 498h1M606 498h1M609 498h1M611 498h1M590 499h1M592 499h1M595 499h1M597 499h1M599 499h1" stroke="#ffffff" stroke-width="1" fill="none" transform="translate(0,0.5)"/>
<path d="M387 192h1M389 192h2M392 192h6M375 193h14M390 193h2M393 193h2M396 193h8M405 193h2M408 193h2M368 194h1M370 194h6M377 194h1M404 194h1M406 194h2M409 194h4M414 194h2M417 194h1M364 195h6M413 195h1M415 195h2M418 195h7M361 196h4M421 196h2M424 196h5M357 197h4M425 197h2M428 197h4M433 197h1M354 198h4M430 198h3M434 198h4M352 199h3M434 199h2M437 199h5M350 200h2M438 200h1M440 200h5M347 201h3M443 201h4M448 201h1M345 202h2M446 202h2M449 202h1M451 202h1M343 203h3M449 203h2M452 203h3M342 204h2M452 204h2M456 204h2M340 205h2M455 205h1M457 205h3M461 205h1M338 206h3M458 206h1M460 206h2M463 206h1M337 207h2M462 207h1M464 207h1M466 207h1M336 208h1M463 208h1M465 208h2M468 208h1M335 209h1M467 209h1M470 209h2M334 210h1M469 210h2M472 210h2M333 211h1M472 211h1M475 211h1M477 211h1M332 212h1M474 212h1M477 212h1M479 212h1M331 213h1M476 213h1M478 213h2M481 213h1M330 214h1M479 214h1M482 214h2M329 215h1M481 215h1M484 215h3M328 216h1M483 216h1M486 216h1M488 216h1M327 217h1M485 217h1M488 217h1M490 217h1M326 218h1M487 218h1M489 218h2M492 218h1M325 219h1M491 219h1M494 219h1M324 220h1M493 220h1M496 220h1M323 221h2M495 221h1M498 221h1M323 222h1M496 222h1M500 222h1M322 223h2M498 223h1M502 223h1M322 224h1M500 224h1M504 224h1M502 225h1M506 225h1M504 226h1M506 226h1M509 226h1M506 227h1M509 227h1M511 227h1M511 228h1M513 228h1M509 229h1M513 229h1M511 230h1M515 230h1M513 231h1M517 231h1M515 232h1M519 232h1M517 233h1M521 233h1M521 234h1M519 235h1M524 235h1M521 236h1M526 236h1M523 237h1M528 237h1M525 238h1M528 238h1M530 238h1M530 239h1M527 240h1M532 240h2M530 241h1M535 241h1M535 242h1M532 243h1M537 243h1M534 244h1M539 244h1M536 245h1M539 245h1M541 246h2M538 247h1M544 247h1M540 248h1M544 248h1M546 249h1M543 250h1M549 250h1M545 251h1M548 251h1M551 252h1M547 253h1M553 254h1M549 255h1M556 255h1M552 256h1M555 256h1M558 257h1M554 258h1M560 259h1M556 260h1M563 260h1M558 261h1M562 261h1M565 262h1M561 263h1M565 263h1M567 264h1M563 265h1M569 266h2M565 267h1M572 268h1M567 269h1M570 270h1M574 270h2M572 272h1M577 272h1M579 273h1M574 274h1M579 274h1M582 275h1M576 276h1M581 276h1M579 278h1M584 278h1M581 280h1M586 280h2M583 282h1M588 282h2M585 284h1M591 284h1M588 286h1M593 286h2M590 288h1M596 288h1M595 289h1M592 290h1M599 290h1M598 291h1M601 292h1M594 293h1M600 293h1M596 295h1M602 295h2M599 297h1M605 297h2M601 299h1M608 299h1M607 300h1M603 302h1M609 302h2M605 304h1M612 304h2M607 306h1M615 306h1M614 307h1M609 308h1M616 309h2M612 311h1M619 311h1M618 312h1M614 313h1M621 314h2M616 316h1M624 316h1M623 317h1M618 318h1M625 319h2M620 320h1M628 321h1M627 322h1M622 323h1M629 324h1M631 324h1M624 325h1M633 326h1M631 327h1M626 328h1M634 329h2M628 330h1M636 332h2M629 333h1M639 334h1M638 335h1M631 336h1M640 337h2M633 338h1M642 340h2M635 341h1M645 342h1M637 343h1M644 343h1M645 345h1M647 345h1M638 346h1M647 348h1M649 348h1M640 349h1M642 351h1M649 351h1M651 351h1M653 353h1M643 354h1M651 354h1M645 356h1M653 356h2M647 359h1M654 359h1M656 359h1M648 362h1M656 362h1M658 362h1M649 364h1M658 365h2M651 367h1M659 367h1M661 367h1M652 370h1M661 370h1M663 370h1M654 372h1M662 373h1M664 373h1M655 375h1M664 376h1M666 376h1M656 378h1M665 379h1M667 379h1M657 381h1M666 381h1M668 382h1M658 383h1M668 384h1M670 384h1M659 386h1M669 387h1M671 387h1M660 389h1M670 390h1M672 390h1M661 391h1M671 393h1M673 393h1M662 394h1M672 395h1M663 396h1M674 396h1M673 398h1M676 398h1M664 399h1M674 401h1M677 401h1M665 402h1M665 404h1M675 404h1M677 404h1M676 406h1M666 407h1M678 407h1M677 409h1M667 410h1M679 410h1M667 412h1M677 412h1M680 412h1M667 415h1M678 415h1M680 415h1M668 417h1M679 417h1M681 418h1M668 420h1M679 420h1M682 420h1M668 422h1M680 423h1M682 423h1M669 425h1M680 425h1M682 426h1M669 427h1M680 428h1M683 428h1M669 429h1M680 430h1M683 431h1M669 432h1M681 433h1M669 434h1M683 434h1M681 435h1M669 436h1M683 436h1M681 438h1M668 439h1M683 439h1M681 440h1M668 441h1M683 441h1M668 443h1M681 443h1M683 444h1M667 445h1M680 445h1M683 446h1M667 447h1M680 447h1M683 448h1M667 449h1M680 450h1M666 451h1M683 451h1M680 452h1M665 453h1M682 453h1M679 454h1M665 455h1M682 455h1M679 456h1M664 457h1M681 457h1M663 459h1M678 459h1M681 460h1M662 461h1M677 461h1M680 462h1M661 463h1M677 463h1M680 464h1M660 465h1M676 465h1M659 466h1M679 466h1M675 467h1M658 468h1M678 468h1M674 469h1M657 470h1M677 470h1M656 471h1M673 471h1M672 472h1M676 472h1M655 473h1M653 474h1M671 474h1M675 474h1M652 476h1M670 476h1M674 476h1M650 477h1M673 477h1M649 478h1M669 478h1M667 479h1M672 479h1M647 480h1M646 481h1M666 481h1M670 481h1M644 482h1M665 482h1M669 482h1M643 483h1M641 484h1M663 484h1M668 484h1M662 485h1M666 485h1M639 486h1M635 487h1M637 487h1M660 487h1M665 487h1M634 488h1M659 488h1M663 488h1M631 489h1M657 489h1M629 490h1M662 490h1M627 491h1M655 491h1M660 491h1M623 492h1M625 492h1M654 492h1M658 492h1M619 493h1M621 493h1M652 493h1M656 493h1M615 494h1M617 494h1M650 494h1M655 494h1M610 495h1M612 495h1M648 495h1M577 496h1M580 496h1M582 496h1M584 496h1M587 496h1M596 496h1M599 496h1M601 496h1M603 496h1M606 496h1M608 496h1M646 496h1M653 496h1M589 497h1M592 497h1M594 497h1M644 497h1M651 497h1M641 498h1M647 498h1M649 498h1M639 499h1M635 500h1M637 500h1M643 500h1M630 501h1M632 501h1M639 501h1M641 501h1M626 502h1M628 502h1M637 502h1M621 503h1M623 503h1M632 503h1M635 503h1M584 504h1M587 504h1M589 504h1M592 504h1M594 504h1M597 504h1M609 504h1M612 504h1M614 504h1M616 504h1M619 504h1M628 504h1M630 504h1M585 505h1M599 505h1M602 505h1M604 505h1M607 505h1M621 505h1M623 505h1M625 505h1M588 506h1M591 506h1M593 506h1M596 506h1M598 506h1M601 506h1M603 506h1M606 506h1M608 506h1M611 506h1M613 506h1M616 506h1M618 506h1" stroke="#e8e800" stroke-width="1" fill="none" transform="translate(0,0.5)"/>
<path d="M321 226h1M319 230h1M317 234h1M316 238h1M315 242h1M314 247h1M313 251h1M313 255h1M313 259h1M313 264h1M313 268h1M314 272h1M314 277h1M315 281h1M316 285h1M317 289h1M319 294h1M320 298h1M321 302h1M323 306h1M325 310h1M327 314h1M328 318h1M330 322h1M332 326h1M335 330h1M337 333h1M339 337h1M341 341h1M344 345h1M346 348h1M349 352h1M351 356h1M354 359h1M357 363h1M359 366h1M362 370h1M365 373h1M368 376h1M371 380h1M374 383h1M377 386h1M380 390h1M383 393h1M386 396h1M390 399h1M393 403h1M397 406h1M401 410h1M404 413h1M409 417h1M413 420h1M417 424h1M421 427h1M426 431h1M431 434h1M436 438h1M441 441h1M446 445h1M451 449h1M457 452h1M463 456h1M469 459h1M475 462h1M481 466h1M487 469h1M494 472h1M500 475h1M507 478h1M514 481h1M521 484h1M528 486h1M535 489h1M543 491h1M550 493h1M558 495h1M565 496h1M572 497h1" stroke="#7e7e7f" stroke-width="1" fill="none" transform="translate(0,0.5)"/>
<path d="M379 193h1M383 193h1M388 193h1M392 193h1M396 193h1M401 193h1M405 193h1M370 194h1M375 194h1M410 194h1M366 195h1M414 195h1M419 195h1M362 196h1M423 196h1M357 197h1M427 197h1M432 198h1M353 199h1M436 199h1M349 200h1M440 200h1M445 201h1M345 202h1M450 203h1M454 204h1M341 205h1M459 206h1M338 207h1M464 208h1M334 209h1M470 210h1M331 212h1M475 212h1M480 214h1M328 215h1M486 217h1M325 219h1M492 219h1M323 222h1M498 222h1M504 225h1M510 229h1M516 232h1M523 236h1M529 240h1M536 244h1M542 249h1M549 253h1M556 258h1M563 264h1M569 269h1M576 275h1M583 281h1M590 287h1M597 294h1M603 300h1M610 307h1M616 314h1M622 322h1M628 329h1M634 337h1M640 345h1M645 353h1M650 361h1M654 369h1M658 377h1M662 385h1M665 393h1M667 401h1M669 409h1M671 417h1M672 425h1M672 432h1M672 439h1M671 446h1M669 452h1M668 458h1M665 464h1M662 469h1M658 474h1M654 478h1M650 482h1M645 486h1M639 489h1M634 491h1M628 494h1M622 495h1M615 497h1M580 498h1M587 498h1M602 498h1M609 498h1M595 499h1" stroke="#fffffe" stroke-width="1" fill="none" transform="translate(0,0.5)"/>
<rect x="98" y="13" width="2" height="2" fill="#c4c4c4"/>
<rect x="154" y="72" width="2" height="2" fill="#c4c4c4"/>
<rect x="162" y="110" width="2" height="2" fill="#c4c4c4"/>
<rect x="155" y="171" width="2" height="2" fill="#c4c4c4"/>
<rect x="225" y="206" width="2" height="2" fill="#c4c4c4"/>
<rect x="193" y="216" width="2" height="2" fill="#c4c4c4"/>
<rect x="100" y="231" width="2" height="2" fill="#c4c4c4"/>
<rect x="308" y="95" width="2" height="2" fill="#c4c4c4"/>
<rect x="516" y="36" width="2" height="2" fill="#c4c4c4"/>
<rect x="557" y="173" width="2" height="2" fill="#c4c4c4"/>
<rect x="533" y="206" width="2" height="2" fill="#c4c4c4"/>
<rect x="416" y="389" width="2" height="2" fill="#c4c4c4"/>
<rect x="553" y="371" width="2" height="2" fill="#c4c4c4"/>
<rect x="506" y="402" width="2" height="2" fill="#c4c4c4"/>
<rect x="539" y="453" width="2" height="2" fill="#c4c4c4"/>
<rect x="253" y="467" width="2" height="2" fill="#c4c4c4"/>
<rect x="226" y="492" width="2" height="2" fill="#c4c4c4"/>
<rect x="422" y="506" width="2" height="2" fill="#c4c4c4"/>
<rect x="587" y="510" width="2" height="2" fill="#c4c4c4"/>
<rect x="380" y="168" width="2" height="2" fill="#c4c4c4"/>
<rect x="608" y="316" width="2" height="2" fill="#c4c4c4"/>
<path d="M370.9 282.7L376.5 277.8L382.1 282.7L376.5 287.59999999999997Z" fill="#ffff00" shape-rendering="auto"/>
<path d="M317.0 224.5L322.6 219.6L328.20000000000005 224.5L322.6 229.4Z" fill="#0a98ff" shape-rendering="auto"/>
<rect x="343" y="288" width="3" height="3" fill="#fff"/>
<rect x="342" y="330" width="5" height="3" rx="1.5" fill="#ffff00" shape-rendering="auto"/>
<rect x="245" y="308" width="5" height="3" fill="#ff0000"/>
<path d="M373 394.5h6M376.5 391v7" stroke="#e06060" stroke-width="1"/>
<rect x="375" y="398" width="2" height="2" fill="#b0b0b0"/>
</svg>
<div class="a ct" style="left:1px;top:-1px;transform:scaleX(.942)">[sol=313.2 02/02]</div>
<div class="a ct" style="left:2.500px;top:545px;transform:scaleX(.915)">20160203_042503 Osaka03_12 Ie_FED rt(242.8, 60.4) vg 29.8 vs 37.8 a 2.4 q 0.977 e 0.594 peri 192.6 node 313.2 incl 50.2</div>
</div>
</body></html>
